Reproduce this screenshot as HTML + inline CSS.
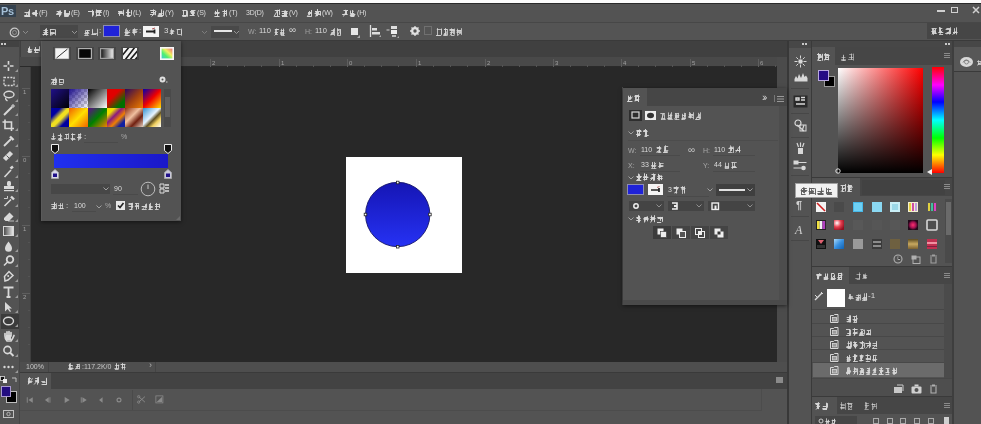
<!DOCTYPE html><html><head><meta charset="utf-8"><style>
html,body{margin:0;padding:0;width:981px;height:424px;overflow:hidden;background:#535353}
.a{position:absolute}
.t{position:absolute;font-family:"Liberation Sans",sans-serif;white-space:nowrap;line-height:1}
svg{overflow:visible}
#w{position:absolute;left:0;top:0;width:981px;height:424px;filter:blur(0.45px)}
</style></head><body><div id="w">
<div class="a" style="left:0px;top:0px;width:981px;height:424px;background:#535353;"></div>
<div class="a" style="left:0px;top:0px;width:981px;height:3px;background:#fbfbfb;"></div>
<div class="a" style="left:0px;top:3px;width:981px;height:1px;background:#2a2a2a;"></div>
<div class="a" style="left:0px;top:4px;width:981px;height:18px;background:#535353;"></div>
<div class="a" style="left:0px;top:22px;width:981px;height:1px;background:#474747;"></div>
<div class="a" style="left:0px;top:23px;width:981px;height:17px;background:#545454;"></div>
<div class="a" style="left:0px;top:40px;width:981px;height:1px;background:#3a3a3a;"></div>
<div class="a" style="left:0px;top:5px;width:16px;height:12px;background:#34414e;"></div>
<div class="t" style="left:1px;top:6px;font-size:11px;color:#a4bfd6;font-weight:bold;letter-spacing:-0.3px;">Ps</div>
<svg class="a" style="left:24px;top:9px" width="15" height="8"><path d="M0.7 7.5H6.2M0.2 6.5H5.2M0.4 7.5H6.1M0.5 3.5H5.3M5.5 0.3V7.5M4.5 2.3V6.6M2.0 7.5L3.2 3.6M8.5 3.5H12.7M8.8 4.5H13.6M7.9 4.5H13.6M8.6 5.5H12.6M12.5 1.0V7.2M11.5 1.1V7.3M12.5 1.7V7.4" stroke="rgb(215,215,215)" stroke-opacity="0.96" stroke-width="1" fill="none"/></svg>
<div class="t" style="left:39px;top:9px;font-size:7px;color:#dcdcdc;letter-spacing:-0.2px;">(F)</div>
<svg class="a" style="left:56px;top:9px" width="15" height="8"><path d="M0.6 4.5H5.5M0.1 5.5H5.3M0.6 2.5H4.5M1.8 3.5H6.2M1.5 4.5H4.8M4.5 1.4V6.6M3.5 2.0V5.7M3.5 1.6V7.9M8.8 5.5H13.0M9.2 6.5H13.1M8.2 7.5H12.6M7.9 4.5H13.3M8.3 6.5H12.1M8.5 1.1V6.7M13.5 2.0V5.9M9.5 1.0V7.1" stroke="rgb(215,215,215)" stroke-opacity="0.96" stroke-width="1" fill="none"/></svg>
<div class="t" style="left:71px;top:9px;font-size:7px;color:#dcdcdc;letter-spacing:-0.2px;">(E)</div>
<svg class="a" style="left:88px;top:9px" width="15" height="8"><path d="M0.3 2.5H5.9M0.9 2.5H5.2M0.0 2.5H5.5M4.5 0.8V7.7M5.5 2.3V6.4M4.5 1.1V5.9M8.2 6.5H13.0M8.7 1.5H13.7M7.9 1.5H13.5M7.6 3.5H13.8M7.7 2.5H13.1M8.5 0.5V7.1M11.5 2.3V6.6M7.7 7.5L12.1 3.9" stroke="rgb(215,215,215)" stroke-opacity="0.96" stroke-width="1" fill="none"/></svg>
<div class="t" style="left:103px;top:9px;font-size:7px;color:#dcdcdc;letter-spacing:-0.2px;">(I)</div>
<svg class="a" style="left:118px;top:9px" width="15" height="8"><path d="M0.2 4.5H6.1M0.5 3.5H4.7M0.0 2.5H4.5M0.3 4.5H5.3M5.5 0.7V6.5M1.5 2.0V6.8M8.5 6.5H12.3M7.9 3.5H12.3M9.1 7.5H12.3M8.9 6.5H13.4M10.5 0.1V7.9M9.5 0.6V6.3M13.5 1.1V5.8" stroke="rgb(215,215,215)" stroke-opacity="0.96" stroke-width="1" fill="none"/></svg>
<div class="t" style="left:133px;top:9px;font-size:7px;color:#dcdcdc;letter-spacing:-0.2px;">(L)</div>
<svg class="a" style="left:150px;top:9px" width="15" height="8"><path d="M0.2 1.5H5.4M0.9 3.5H4.4M0.0 5.5H4.6M1.2 3.5H4.7M5.5 1.9V6.2M3.5 0.4V6.1M1.6 7.5L6.2 2.2M7.7 6.5H13.5M7.6 7.5H12.7M8.7 4.5H12.6M8.4 5.5H12.0M11.5 0.3V8.0M13.5 1.6V6.7" stroke="rgb(215,215,215)" stroke-opacity="0.96" stroke-width="1" fill="none"/></svg>
<div class="t" style="left:165px;top:9px;font-size:7px;color:#dcdcdc;letter-spacing:-0.2px;">(Y)</div>
<svg class="a" style="left:182px;top:9px" width="15" height="8"><path d="M0.4 7.5H4.6M0.4 1.5H5.4M0.6 6.5H5.3M0.1 6.5H4.9M4.5 2.0V6.8M5.5 2.1V7.7M1.5 1.2V5.9M9.0 1.5H13.5M8.9 4.5H12.7M8.5 3.5H12.8M7.7 6.5H12.7M8.0 2.5H12.3M11.5 1.8V5.8M10.5 1.5V6.8M11.5 1.7V6.9" stroke="rgb(215,215,215)" stroke-opacity="0.96" stroke-width="1" fill="none"/></svg>
<div class="t" style="left:197px;top:9px;font-size:7px;color:#dcdcdc;letter-spacing:-0.2px;">(S)</div>
<svg class="a" style="left:214px;top:9px" width="15" height="8"><path d="M0.5 4.5H5.3M1.8 7.5H4.6M0.4 7.5H5.5M0.7 3.5H5.7M3.5 0.5V7.3M1.5 1.9V5.7M9.2 2.5H12.0M9.3 2.5H13.0M9.4 4.5H12.2M8.3 2.5H12.8M10.5 0.9V7.8M10.5 0.8V6.9M12.5 0.9V6.8M9.4 7.5L10.9 3.8" stroke="rgb(215,215,215)" stroke-opacity="0.96" stroke-width="1" fill="none"/></svg>
<div class="t" style="left:229px;top:9px;font-size:7px;color:#dcdcdc;letter-spacing:-0.2px;">(T)</div>
<div class="t" style="left:246px;top:9px;font-size:7px;color:#dcdcdc;letter-spacing:-0.2px;">3D(D)</div>
<svg class="a" style="left:274px;top:9px" width="15" height="8"><path d="M0.2 7.5H5.8M1.5 1.5H5.8M0.8 1.5H4.6M3.5 1.3V6.8M3.5 0.8V7.3M5.5 0.4V5.9M0.0 7.5L3.3 1.8M7.6 6.5H12.2M8.1 4.5H12.8M8.0 7.5H13.6M8.0 4.5H13.6M7.6 2.5H13.4M11.5 1.3V7.5M10.5 1.6V7.4M12.5 2.4V7.9M8.5 7.5L13.7 2.5" stroke="rgb(215,215,215)" stroke-opacity="0.96" stroke-width="1" fill="none"/></svg>
<div class="t" style="left:289px;top:9px;font-size:7px;color:#dcdcdc;letter-spacing:-0.2px;">(V)</div>
<svg class="a" style="left:307px;top:9px" width="15" height="8"><path d="M0.2 7.5H4.8M0.9 4.5H4.7M1.0 3.5H5.0M2.5 2.0V6.3M4.5 1.0V7.2M0.3 7.5L3.2 3.2M7.6 4.5H12.5M8.5 3.5H12.0M8.8 5.5H13.7M8.0 2.5H13.8M13.5 2.3V6.7M9.5 2.3V7.3M10.5 0.0V7.1M8.5 7.5L11.2 2.5" stroke="rgb(215,215,215)" stroke-opacity="0.96" stroke-width="1" fill="none"/></svg>
<div class="t" style="left:322px;top:9px;font-size:7px;color:#dcdcdc;letter-spacing:-0.2px;">(W)</div>
<svg class="a" style="left:342px;top:9px" width="15" height="8"><path d="M1.5 1.5H6.0M0.7 5.5H5.7M0.2 5.5H4.5M4.5 1.7V5.9M3.5 0.8V5.6M1.4 7.5L5.1 1.1M8.7 7.5H12.4M7.8 6.5H12.8M9.1 4.5H12.3M8.6 6.5H12.1M8.8 5.5H13.4M8.5 1.5V5.7M10.5 1.1V7.9M8.6 7.5L11.3 1.8" stroke="rgb(215,215,215)" stroke-opacity="0.96" stroke-width="1" fill="none"/></svg>
<div class="t" style="left:357px;top:9px;font-size:7px;color:#dcdcdc;letter-spacing:-0.2px;">(H)</div>
<div class="a" style="left:937px;top:10px;width:8px;height:2px;background:#d0d0d0;"></div>
<div class="a" style="left:951px;top:7px;width:5px;height:4px;border:1.5px solid #d0d0d0;"></div>
<svg class="a" style="left:972px;top:6px" width="8" height="8" viewBox="0 0 8 8"><path d="M1 1L7 7M7 1L1 7" stroke="#d0d0d0" stroke-width="1.5"/></svg>
<svg class="a" style="left:9px;top:27px" width="12" height="11" viewBox="0 0 12 11"><circle cx="5.5" cy="5.5" r="4.3" fill="none" stroke="#c8c8c8" stroke-width="1.2"/><circle cx="5.5" cy="5.5" r="2" fill="none" stroke="#9a9a9a" stroke-width="0.8"/></svg>
<svg class="a" style="left:23px;top:31px" width="5" height="3" viewBox="0 0 5 3"><path d="M0 0L2.5 2.5L5 0" fill="none" stroke="#999" stroke-width="0.8"/></svg>
<div class="a" style="left:40px;top:25px;width:38px;height:13px;background:#484848;"></div>
<svg class="a" style="left:42px;top:28px" width="15" height="8"><path d="M1.4 6.5H5.3M1.2 4.5H6.2M0.5 6.5H6.2M1.4 2.5H5.9M3.5 0.9V6.9M4.5 1.8V6.5M4.5 0.2V7.6M1.5 7.5L4.0 2.7M8.4 4.5H12.0M7.9 1.5H12.9M8.0 5.5H12.9M13.5 1.3V7.3M8.5 1.1V7.3M8.5 7.5L13.8 4.0" stroke="rgb(215,215,215)" stroke-opacity="0.88" stroke-width="1" fill="none"/></svg>
<svg class="a" style="left:72px;top:31px" width="5" height="3" viewBox="0 0 5 3"><path d="M0 0L2.5 2.5L5 0" fill="none" stroke="#aaa" stroke-width="0.8"/></svg>
<svg class="a" style="left:84px;top:28px" width="15" height="8"><path d="M1.8 2.5H5.9M0.3 5.5H5.3M0.3 7.5H4.7M1.7 4.5H5.0M3.5 2.1V7.1M1.5 2.3V6.4M1.5 7.5L4.4 2.1M7.5 6.5H12.4M7.7 6.5H12.0M9.2 5.5H13.3M8.5 0.9V5.9M8.5 2.2V6.2M13.5 0.7V7.9" stroke="rgb(215,215,215)" stroke-opacity="0.80" stroke-width="1" fill="none"/></svg>
<div class="t" style="left:99px;top:27px;font-size:8px;color:#dcdcdc;">:</div>
<div class="a" style="left:103px;top:25px;width:17px;height:12px;background:#1f22d8;border:1px solid #8c8cb0;box-sizing:border-box;"></div>
<svg class="a" style="left:124px;top:28px" width="15" height="8"><path d="M0.5 7.5H5.8M0.4 4.5H5.6M1.7 7.5H4.8M1.7 5.5H4.5M1.4 4.5H6.2M3.5 1.8V6.5M2.5 0.1V5.8M1.5 1.1V7.2M1.5 7.5L6.2 1.8M8.4 2.5H12.5M8.7 1.5H13.7M9.0 4.5H12.8M8.1 4.5H12.4M8.5 3.5H13.3M10.5 0.2V7.4M9.5 1.4V5.9" stroke="rgb(215,215,215)" stroke-opacity="0.80" stroke-width="1" fill="none"/></svg>
<div class="t" style="left:139px;top:27px;font-size:8px;color:#dcdcdc;">:</div>
<div class="a" style="left:143px;top:26px;width:16px;height:11px;background:#f4f4f4;"></div>
<svg class="a" style="left:143px;top:26px" width="16" height="11" viewBox="0 0 16 11"><path d="M3 5.5h9M11.5 3.5v4" stroke="#222" stroke-width="1.8"/><path d="M12 2L9 3" stroke="#a03030" stroke-width="0.8"/></svg>
<div class="t" style="left:164px;top:27px;font-size:8px;color:#dcdcdc;">3</div>
<svg class="a" style="left:169px;top:28px" width="14" height="8"><path d="M1.3 3.5H5.4M1.3 2.5H4.9M0.6 5.5H4.6M1.4 4.5H4.3M2.5 0.6V7.0M3.5 2.3V6.0M7.7 1.5H11.5M8.7 6.5H11.9M8.6 1.5H11.2M12.5 0.6V7.7M8.5 1.3V6.4M12.5 1.7V6.4" stroke="rgb(215,215,215)" stroke-opacity="0.80" stroke-width="1" fill="none"/></svg>
<svg class="a" style="left:202px;top:31px" width="5" height="3" viewBox="0 0 5 3"><path d="M0 0L2.5 2.5L5 0" fill="none" stroke="#888" stroke-width="0.8"/></svg>
<div class="a" style="left:211px;top:26px;width:28px;height:12px;background:#494949;"></div>
<div class="a" style="left:214px;top:30px;width:18px;height:2px;background:#e6e6e6;"></div>
<svg class="a" style="left:234px;top:31px" width="5" height="3" viewBox="0 0 5 3"><path d="M0 0L2.5 2.5L5 0" fill="none" stroke="#aaa" stroke-width="0.8"/></svg>
<div class="t" style="left:248px;top:28px;font-size:7px;color:#a0a0a0;">W:</div>
<div class="t" style="left:259px;top:27px;font-size:7.5px;color:#dcdcdc;">110</div>
<svg class="a" style="left:274px;top:28px" width="12" height="8"><path d="M1.1 1.5H4.8M0.8 1.5H4.7M1.4 6.5H3.9M0.6 4.5H3.7M1.5 1.3V6.6M2.5 0.5V6.6M0.6 7.5L3.8 3.9M6.3 6.5H10.0M6.0 4.5H10.2M6.1 5.5H10.5M6.9 7.5H10.7M6.6 2.5H10.3M7.5 0.8V7.0M9.5 0.5V6.1M9.5 1.2V7.5" stroke="rgb(215,215,215)" stroke-opacity="0.80" stroke-width="1" fill="none"/></svg>
<div class="t" style="left:289px;top:25px;font-size:10px;color:#cfcfcf;">&#x221E;</div>
<div class="t" style="left:305px;top:28px;font-size:7px;color:#a0a0a0;">H:</div>
<div class="t" style="left:315px;top:27px;font-size:7.5px;color:#dcdcdc;">110</div>
<svg class="a" style="left:330px;top:28px" width="12" height="8"><path d="M0.3 6.5H4.1M1.3 2.5H4.6M0.9 5.5H3.5M1.3 4.5H4.7M4.5 0.1V7.9M3.5 1.0V6.3M0.9 7.5L4.3 1.9M7.3 7.5H10.3M7.3 2.5H9.7M7.0 1.5H10.3M10.5 1.1V7.7M7.5 0.2V7.0M10.5 1.3V6.2M7.5 7.5L9.6 3.4" stroke="rgb(215,215,215)" stroke-opacity="0.80" stroke-width="1" fill="none"/></svg>
<div class="a" style="left:351px;top:28px;width:7px;height:7px;background:#e6e6e6;"></div>
<svg class="a" style="left:357px;top:35px" width="4" height="4" viewBox="0 0 4 4"><path d="M0 3L3 0V3Z" fill="#aaa"/></svg>
<svg class="a" style="left:369px;top:25px" width="13" height="13" viewBox="0 0 13 13"><path d="M1.5 0v12" stroke="#ddd" stroke-width="1.3"/><rect x="3" y="3" width="5" height="2.5" fill="#ddd"/><rect x="3" y="7" width="8" height="2.5" fill="#ddd"/><path d="M10 12L12 10V12Z" fill="#aaa"/></svg>
<svg class="a" style="left:386px;top:25px" width="14" height="14" viewBox="0 0 14 14"><path d="M0.5 5h3" stroke="#ccc" stroke-width="1"/><rect x="5" y="1" width="6" height="3" fill="#ddd"/><rect x="5" y="5" width="6" height="4" fill="#eee"/><rect x="6" y="10" width="4" height="2" fill="#bbb"/><path d="M11 13L13 11V13Z" fill="#aaa"/></svg>
<svg class="a" style="left:410px;top:26px" width="10" height="10" viewBox="0 0 10 10"><circle cx="5" cy="5" r="2.8" fill="none" stroke="#e0e0e0" stroke-width="2.2"/><path d="M5 0v2M5 8v2M0 5h2M8 5h2M1.5 1.5l1.4 1.4M7.1 7.1l1.4 1.4M1.5 8.5l1.4-1.4M7.1 2.9l1.4-1.4" stroke="#e0e0e0" stroke-width="1.3"/></svg>
<div class="a" style="left:424px;top:26px;width:8px;height:9px;border:1px solid #707070;box-sizing:border-box;"></div>
<svg class="a" style="left:436px;top:28px" width="27" height="8"><path d="M0.8 1.5H4.9M0.3 7.5H4.9M0.0 7.5H4.8M1.5 0.1V7.8M5.5 0.6V6.2M5.5 0.8V7.3M7.9 1.5H11.1M7.2 7.5H11.0M8.0 5.5H10.6M8.1 1.5H12.0M7.5 6.5H10.9M11.5 2.0V7.7M9.5 0.0V5.8M9.5 1.7V7.6M8.4 7.5L10.9 3.4M13.7 1.5H17.7M13.5 2.5H18.8M13.9 4.5H17.3M15.0 7.5H18.5M13.6 1.5H18.1M15.5 0.3V6.9M18.5 0.6V6.7M17.5 1.8V6.1M14.0 7.5L17.1 1.8M20.5 2.5H25.2M21.6 2.5H24.6M20.8 3.5H24.0M20.5 4.5H24.3M25.5 0.2V6.9M24.5 2.0V5.8M21.5 0.7V7.7M22.0 7.5L24.6 3.8" stroke="rgb(215,215,215)" stroke-opacity="0.80" stroke-width="1" fill="none"/></svg>
<div class="a" style="left:927px;top:23px;width:54px;height:16px;background:#464646;"></div>
<svg class="a" style="left:931px;top:27px" width="28" height="8"><path d="M0.3 4.5H4.8M1.2 6.5H5.8M1.2 5.5H5.2M0.6 1.5H5.7M1.5 1.8V5.8M4.5 2.0V7.0M2.5 1.5V7.8M1.0 7.5L4.4 2.2M7.3 5.5H11.9M7.7 5.5H12.3M8.2 7.5H12.1M8.3 1.5H11.3M9.5 2.1V5.6M9.5 0.5V6.3M8.5 0.0V5.8M8.6 7.5L11.1 3.6M14.2 6.5H19.7M15.4 1.5H19.1M15.6 5.5H18.5M14.6 2.5H19.5M19.5 0.3V6.8M18.5 2.3V7.5M15.9 7.5L19.7 2.4M22.1 5.5H26.6M22.2 5.5H25.2M22.5 5.5H25.7M25.5 0.4V7.5M23.5 1.2V7.1M21.5 7.5L26.0 3.7" stroke="rgb(215,215,215)" stroke-opacity="0.88" stroke-width="1" fill="none"/></svg>
<div class="a" style="left:0px;top:41px;width:19px;height:383px;background:#535353;"></div>
<div class="a" style="left:0px;top:41px;width:19px;height:6px;background:#424242;"></div>
<div class="a" style="left:1px;top:43px;width:2px;height:2px;background:#c8c8c8;"></div>
<div class="a" style="left:4px;top:43px;width:2px;height:2px;background:#c8c8c8;"></div>
<div class="a" style="left:19px;top:41px;width:1px;height:383px;background:#464646;"></div>
<div class="a" style="left:20px;top:41px;width:767px;height:16px;background:#404040;"></div>
<div class="a" style="left:21px;top:41px;width:21px;height:16px;background:#515151;"></div>
<svg class="a" style="left:27px;top:46px" width="14" height="7"><path d="M1.5 6.5H4.6M0.6 5.5H5.1M1.5 3.5H4.4M2.5 0.5V6.2M2.5 1.1V6.6M1.5 2.1V6.0M1.2 6.5L5.3 3.5M7.1 3.5H12.2M8.4 3.5H11.9M7.1 4.5H12.6M7.5 6.5H11.5M8.5 1.1V6.2M12.5 0.3V5.2" stroke="rgb(215,215,215)" stroke-opacity="0.96" stroke-width="1" fill="none"/></svg>
<div class="a" style="left:20px;top:57px;width:767px;height:10px;background:#494949;"></div>
<div class="a" style="left:20px;top:66px;width:757px;height:1px;background:#2a2a2a;"></div>
<div class="a" style="left:20px;top:67px;width:11px;height:295px;background:#494949;"></div>
<div class="a" style="left:30px;top:67px;width:1px;height:295px;background:#3e3e3e;"></div>
<div class="a" style="left:210px;top:59px;width:1px;height:8px;background:#5e5e5e;"></div>
<div class="t" style="left:212px;top:60px;font-size:6px;color:#a0a0a0;">2</div>
<div class="a" style="left:227px;top:65px;width:1px;height:2px;background:#545454;"></div>
<div class="a" style="left:244px;top:65px;width:1px;height:2px;background:#545454;"></div>
<div class="a" style="left:261px;top:65px;width:1px;height:2px;background:#545454;"></div>
<div class="a" style="left:279px;top:59px;width:1px;height:8px;background:#5e5e5e;"></div>
<div class="t" style="left:281px;top:60px;font-size:6px;color:#a0a0a0;">1</div>
<div class="a" style="left:296px;top:65px;width:1px;height:2px;background:#545454;"></div>
<div class="a" style="left:313px;top:65px;width:1px;height:2px;background:#545454;"></div>
<div class="a" style="left:330px;top:65px;width:1px;height:2px;background:#545454;"></div>
<div class="a" style="left:347px;top:59px;width:1px;height:8px;background:#5e5e5e;"></div>
<div class="t" style="left:349px;top:60px;font-size:6px;color:#a0a0a0;">0</div>
<div class="a" style="left:364px;top:65px;width:1px;height:2px;background:#545454;"></div>
<div class="a" style="left:381px;top:65px;width:1px;height:2px;background:#545454;"></div>
<div class="a" style="left:398px;top:65px;width:1px;height:2px;background:#545454;"></div>
<div class="a" style="left:416px;top:59px;width:1px;height:8px;background:#5e5e5e;"></div>
<div class="t" style="left:418px;top:60px;font-size:6px;color:#a0a0a0;">1</div>
<div class="a" style="left:433px;top:65px;width:1px;height:2px;background:#545454;"></div>
<div class="a" style="left:450px;top:65px;width:1px;height:2px;background:#545454;"></div>
<div class="a" style="left:467px;top:65px;width:1px;height:2px;background:#545454;"></div>
<div class="a" style="left:485px;top:59px;width:1px;height:8px;background:#5e5e5e;"></div>
<div class="t" style="left:487px;top:60px;font-size:6px;color:#a0a0a0;">2</div>
<div class="a" style="left:502px;top:65px;width:1px;height:2px;background:#545454;"></div>
<div class="a" style="left:519px;top:65px;width:1px;height:2px;background:#545454;"></div>
<div class="a" style="left:536px;top:65px;width:1px;height:2px;background:#545454;"></div>
<div class="a" style="left:553px;top:59px;width:1px;height:8px;background:#5e5e5e;"></div>
<div class="t" style="left:555px;top:60px;font-size:6px;color:#a0a0a0;">3</div>
<div class="a" style="left:570px;top:65px;width:1px;height:2px;background:#545454;"></div>
<div class="a" style="left:587px;top:65px;width:1px;height:2px;background:#545454;"></div>
<div class="a" style="left:604px;top:65px;width:1px;height:2px;background:#545454;"></div>
<div class="a" style="left:621px;top:59px;width:1px;height:8px;background:#5e5e5e;"></div>
<div class="t" style="left:623px;top:60px;font-size:6px;color:#a0a0a0;">4</div>
<div class="a" style="left:638px;top:65px;width:1px;height:2px;background:#545454;"></div>
<div class="a" style="left:655px;top:65px;width:1px;height:2px;background:#545454;"></div>
<div class="a" style="left:672px;top:65px;width:1px;height:2px;background:#545454;"></div>
<div class="a" style="left:690px;top:59px;width:1px;height:8px;background:#5e5e5e;"></div>
<div class="t" style="left:692px;top:60px;font-size:6px;color:#a0a0a0;">5</div>
<div class="a" style="left:707px;top:65px;width:1px;height:2px;background:#545454;"></div>
<div class="a" style="left:724px;top:65px;width:1px;height:2px;background:#545454;"></div>
<div class="a" style="left:741px;top:65px;width:1px;height:2px;background:#545454;"></div>
<div class="a" style="left:758px;top:59px;width:1px;height:8px;background:#5e5e5e;"></div>
<div class="t" style="left:760px;top:60px;font-size:6px;color:#a0a0a0;">6</div>
<div class="a" style="left:775px;top:65px;width:1px;height:2px;background:#545454;"></div>
<div class="a" style="left:22px;top:88px;width:8px;height:1px;background:#5e5e5e;"></div>
<div class="t" style="left:23px;top:89px;font-size:6px;color:#a0a0a0;">1</div>
<div class="a" style="left:28px;top:105px;width:2px;height:1px;background:#545454;"></div>
<div class="a" style="left:28px;top:122px;width:2px;height:1px;background:#545454;"></div>
<div class="a" style="left:28px;top:139px;width:2px;height:1px;background:#545454;"></div>
<div class="a" style="left:22px;top:156px;width:8px;height:1px;background:#5e5e5e;"></div>
<div class="t" style="left:23px;top:157px;font-size:6px;color:#a0a0a0;">0</div>
<div class="a" style="left:28px;top:173px;width:2px;height:1px;background:#545454;"></div>
<div class="a" style="left:28px;top:190px;width:2px;height:1px;background:#545454;"></div>
<div class="a" style="left:28px;top:207px;width:2px;height:1px;background:#545454;"></div>
<div class="a" style="left:22px;top:225px;width:8px;height:1px;background:#5e5e5e;"></div>
<div class="t" style="left:23px;top:226px;font-size:6px;color:#a0a0a0;">1</div>
<div class="a" style="left:28px;top:242px;width:2px;height:1px;background:#545454;"></div>
<div class="a" style="left:28px;top:259px;width:2px;height:1px;background:#545454;"></div>
<div class="a" style="left:28px;top:276px;width:2px;height:1px;background:#545454;"></div>
<div class="a" style="left:22px;top:293px;width:8px;height:1px;background:#5e5e5e;"></div>
<div class="t" style="left:23px;top:294px;font-size:6px;color:#a0a0a0;">2</div>
<div class="a" style="left:28px;top:310px;width:2px;height:1px;background:#545454;"></div>
<div class="a" style="left:28px;top:327px;width:2px;height:1px;background:#545454;"></div>
<div class="a" style="left:28px;top:344px;width:2px;height:1px;background:#545454;"></div>
<div class="a" style="left:31px;top:67px;width:746px;height:295px;background:#282828;"></div>
<div class="a" style="left:777px;top:57px;width:10px;height:305px;background:#4b4b4b;"></div>
<div class="a" style="left:20px;top:362px;width:767px;height:10px;background:#4e4e4e;"></div>
<div class="a" style="left:48px;top:362px;width:1px;height:10px;background:#444;"></div>
<div class="a" style="left:155px;top:362px;width:1px;height:10px;background:#444;"></div>
<div class="t" style="left:26px;top:363px;font-size:7px;color:#c8c8c8;">100%</div>
<svg class="a" style="left:68px;top:363px" width="14" height="7"><path d="M0.2 5.5H5.6M0.5 6.5H4.4M1.2 5.5H4.5M1.4 2.5H4.7M0.6 2.5H4.7M1.5 1.1V5.1M1.5 0.6V5.9M2.5 0.1V6.6M1.9 6.5L4.9 3.7M7.5 5.5H11.5M8.5 1.5H11.1M7.9 3.5H11.6M9.5 1.1V5.2M11.5 0.8V6.2M7.3 6.5L10.9 1.2" stroke="rgb(215,215,215)" stroke-opacity="0.80" stroke-width="1" fill="none"/></svg>
<div class="t" style="left:82px;top:363px;font-size:7px;color:#c8c8c8;">:117.2K/0</div>
<svg class="a" style="left:114px;top:363px" width="13" height="7"><path d="M1.2 2.5H5.2M0.4 5.5H4.3M0.9 6.5H4.2M4.5 1.6V6.5M2.5 1.3V6.1M2.5 0.1V6.0M6.5 1.5H11.2M7.1 1.5H11.4M7.4 4.5H11.5M8.5 0.0V5.3M10.5 0.9V6.9M8.5 1.4V6.4" stroke="rgb(215,215,215)" stroke-opacity="0.80" stroke-width="1" fill="none"/></svg>
<div class="t" style="left:149px;top:361px;font-size:9px;color:#b0b0b0;">&#x203A;</div>
<div class="a" style="left:20px;top:372px;width:767px;height:1px;background:#3a3a3a;"></div>
<div class="a" style="left:20px;top:373px;width:767px;height:16px;background:#434343;"></div>
<div class="a" style="left:20px;top:373px;width:31px;height:16px;background:#535353;"></div>
<svg class="a" style="left:27px;top:377px" width="21" height="8"><path d="M1.4 1.5H4.2M1.0 5.5H4.8M0.9 4.5H5.5M1.5 1.3V7.0M2.5 0.1V6.1M1.1 7.5L5.6 1.4M8.1 4.5H11.7M8.1 3.5H11.9M8.1 1.5H11.1M11.5 0.0V6.0M11.5 1.1V6.2M10.5 0.5V7.7M7.1 7.5L10.9 3.2M14.5 7.5H19.7M15.2 5.5H18.6M15.7 7.5H19.3M15.6 7.5H19.7M14.3 4.5H18.2M19.5 1.8V7.2M19.5 0.8V7.4" stroke="rgb(215,215,215)" stroke-opacity="0.88" stroke-width="1" fill="none"/></svg>
<div class="a" style="left:776px;top:377px;width:7px;height:6px;background:#8a8a8a;"></div>
<div class="a" style="left:20px;top:389px;width:767px;height:35px;background:#535353;"></div>
<div class="a" style="left:761px;top:389px;width:1px;height:22px;background:#4c4c4c;"></div>
<div class="a" style="left:20px;top:410px;width:742px;height:1px;background:#4c4c4c;"></div>
<svg class="a" style="left:25px;top:395px" width="10" height="10" viewBox="0 0 10 10"><g transform="translate(5 5) scale(0.78) translate(-5 -5)"><path d="M1.5 1.5v7" stroke="#8a8a8a" stroke-width="1.2"/><path d="M8.5 1.5L3 5L8.5 8.5Z" fill="#8a8a8a"/></g></svg>
<svg class="a" style="left:43px;top:395px" width="10" height="10" viewBox="0 0 10 10"><g transform="translate(5 5) scale(0.78) translate(-5 -5)"><path d="M7.5 1.5v7" stroke="#8a8a8a" stroke-width="1.2"/><path d="M6 1.5L1 5L6 8.5Z" fill="#8a8a8a"/></g></svg>
<svg class="a" style="left:62px;top:395px" width="10" height="10" viewBox="0 0 10 10"><g transform="translate(5 5) scale(0.78) translate(-5 -5)"><path d="M2 1L8.5 5L2 9Z" fill="#8a8a8a"/></g></svg>
<svg class="a" style="left:79px;top:395px" width="10" height="10" viewBox="0 0 10 10"><g transform="translate(5 5) scale(0.78) translate(-5 -5)"><path d="M1.5 1.5v7" stroke="#8a8a8a" stroke-width="1.2"/><path d="M3 1.5L8.5 5L3 8.5Z" fill="#8a8a8a"/></g></svg>
<svg class="a" style="left:96px;top:395px" width="10" height="10" viewBox="0 0 10 10"><g transform="translate(5 5) scale(0.78) translate(-5 -5)"><path d="M7 1.5L2.5 5L7 8.5Z" fill="#8a8a8a"/></g></svg>
<svg class="a" style="left:114px;top:395px" width="10" height="10" viewBox="0 0 10 10"><g transform="translate(5 5) scale(0.78) translate(-5 -5)"><circle cx="5" cy="5" r="2.5" fill="none" stroke="#8a8a8a" stroke-width="1.5"/></g></svg>
<div class="a" style="left:132px;top:390px;width:1px;height:20px;background:#4a4a4a;"></div>
<svg class="a" style="left:136px;top:394px" width="12" height="12" viewBox="0 0 12 12"><g transform="translate(5 5) scale(0.78) translate(-5 -5)"><path d="M2 2L10 9M10 2L2 9" stroke="#8a8a8a" stroke-width="1.2"/><circle cx="2" cy="2" r="1.5" fill="none" stroke="#8a8a8a"/><circle cx="2" cy="9" r="1.5" fill="none" stroke="#8a8a8a"/></g></svg>
<svg class="a" style="left:154px;top:394px" width="11" height="11" viewBox="0 0 11 11"><g transform="translate(5 5) scale(0.78) translate(-5 -5)"><rect x="1" y="1" width="9" height="9" fill="none" stroke="#8a8a8a"/><path d="M2 9L9 2V9Z" fill="#8a8a8a"/></g></svg>
<svg class="a" style="left:2px;top:60px" width="14" height="12" viewBox="0 0 14 12"><path d="M6.5 1v10M1.5 6h10" stroke="#d8d8d8" stroke-width="1.6"/><circle cx="6.5" cy="6" r="1.6" fill="#535353"/></svg>
<svg class="a" style="left:15px;top:69px" width="3" height="3" viewBox="0 0 3 3"><path d="M0 3L3 0V3Z" fill="#9a9a9a"/></svg>
<svg class="a" style="left:2px;top:74.5px" width="14" height="12" viewBox="0 0 14 12"><rect x="2" y="2.5" width="10" height="8" fill="none" stroke="#d8d8d8" stroke-width="1.3" stroke-dasharray="2 1.2"/></svg>
<svg class="a" style="left:15px;top:83.5px" width="3" height="3" viewBox="0 0 3 3"><path d="M0 3L3 0V3Z" fill="#9a9a9a"/></svg>
<svg class="a" style="left:2px;top:90px" width="14" height="12" viewBox="0 0 14 12"><ellipse cx="7" cy="4.5" rx="5" ry="3.2" fill="none" stroke="#d8d8d8" stroke-width="1.4"/><path d="M4 7.5C3 9 4 10 5.5 11" fill="none" stroke="#d8d8d8" stroke-width="1.3"/></svg>
<svg class="a" style="left:15px;top:99px" width="3" height="3" viewBox="0 0 3 3"><path d="M0 3L3 0V3Z" fill="#9a9a9a"/></svg>
<svg class="a" style="left:2px;top:104px" width="14" height="12" viewBox="0 0 14 12"><path d="M2 11L10 3" stroke="#d8d8d8" stroke-width="2"/><path d="M11 0v4M9 2h4" stroke="#d8d8d8" stroke-width="1"/></svg>
<svg class="a" style="left:15px;top:113px" width="3" height="3" viewBox="0 0 3 3"><path d="M0 3L3 0V3Z" fill="#9a9a9a"/></svg>
<svg class="a" style="left:2px;top:119px" width="14" height="12" viewBox="0 0 14 12"><path d="M3 0.5v9h9M0.5 3h9v9" fill="none" stroke="#d8d8d8" stroke-width="1.6"/></svg>
<svg class="a" style="left:15px;top:128px" width="3" height="3" viewBox="0 0 3 3"><path d="M0 3L3 0V3Z" fill="#9a9a9a"/></svg>
<svg class="a" style="left:2px;top:134.5px" width="14" height="12" viewBox="0 0 14 12"><path d="M2 11L9 4" stroke="#d8d8d8" stroke-width="1.8"/><path d="M8 1.5L11.5 5" stroke="#d8d8d8" stroke-width="2.4"/></svg>
<svg class="a" style="left:15px;top:143.5px" width="3" height="3" viewBox="0 0 3 3"><path d="M0 3L3 0V3Z" fill="#9a9a9a"/></svg>
<svg class="a" style="left:2px;top:150px" width="14" height="12" viewBox="0 0 14 12"><path d="M2.5 9.5L9.5 2.5" stroke="#d8d8d8" stroke-width="4.5"/><path d="M4.5 5.5l3 3" stroke="#535353" stroke-width="1"/></svg>
<svg class="a" style="left:15px;top:159px" width="3" height="3" viewBox="0 0 3 3"><path d="M0 3L3 0V3Z" fill="#9a9a9a"/></svg>
<svg class="a" style="left:2px;top:165.5px" width="14" height="12" viewBox="0 0 14 12"><path d="M2.5 11L9 4" stroke="#d8d8d8" stroke-width="1.6"/><path d="M8.5 2.5L11 0.5" stroke="#d8d8d8" stroke-width="2.6"/></svg>
<svg class="a" style="left:15px;top:174.5px" width="3" height="3" viewBox="0 0 3 3"><path d="M0 3L3 0V3Z" fill="#9a9a9a"/></svg>
<svg class="a" style="left:2px;top:180px" width="14" height="12" viewBox="0 0 14 12"><rect x="5" y="1" width="4" height="5" rx="1.5" fill="#d8d8d8"/><rect x="2" y="6" width="10" height="3" fill="#d8d8d8"/><rect x="2" y="10" width="10" height="1.2" fill="#d8d8d8"/></svg>
<svg class="a" style="left:15px;top:189px" width="3" height="3" viewBox="0 0 3 3"><path d="M0 3L3 0V3Z" fill="#9a9a9a"/></svg>
<svg class="a" style="left:2px;top:195px" width="14" height="12" viewBox="0 0 14 12"><path d="M2.5 11L9 4.5" stroke="#d8d8d8" stroke-width="1.6"/><path d="M9 1.5L12 4.5" stroke="#d8d8d8" stroke-width="2.4"/><path d="M2 3.5h3.5V1" fill="none" stroke="#d8d8d8" stroke-width="0.9"/></svg>
<svg class="a" style="left:15px;top:204px" width="3" height="3" viewBox="0 0 3 3"><path d="M0 3L3 0V3Z" fill="#9a9a9a"/></svg>
<svg class="a" style="left:2px;top:210px" width="14" height="12" viewBox="0 0 14 12"><path d="M2 8L7.5 2.5L11.5 6.5L7 11H3.5L2 9.5Z" fill="#d8d8d8"/><path d="M6 11h6" stroke="#d8d8d8" stroke-width="0.8"/></svg>
<svg class="a" style="left:15px;top:219px" width="3" height="3" viewBox="0 0 3 3"><path d="M0 3L3 0V3Z" fill="#9a9a9a"/></svg>
<svg class="a" style="left:2px;top:225px" width="14" height="12" viewBox="0 0 14 12"><rect x="1.5" y="1.5" width="10" height="9" fill="url(#tg)" stroke="#d8d8d8" stroke-width="1"/><defs><linearGradient id="tg"><stop offset="0" stop-color="#444"/><stop offset="1" stop-color="#eee"/></linearGradient></defs></svg>
<svg class="a" style="left:15px;top:234px" width="3" height="3" viewBox="0 0 3 3"><path d="M0 3L3 0V3Z" fill="#9a9a9a"/></svg>
<svg class="a" style="left:2px;top:239.7px" width="14" height="12" viewBox="0 0 14 12"><path d="M6.5 1.5C4 5 3 6.5 3 8.2A3.5 3.5 0 0 0 10 8.2C10 6.5 9 5 6.5 1.5Z" fill="#d8d8d8"/></svg>
<svg class="a" style="left:15px;top:248.7px" width="3" height="3" viewBox="0 0 3 3"><path d="M0 3L3 0V3Z" fill="#9a9a9a"/></svg>
<svg class="a" style="left:2px;top:254.60000000000002px" width="14" height="12" viewBox="0 0 14 12"><circle cx="8" cy="4.5" r="3.3" fill="none" stroke="#d8d8d8" stroke-width="1.8"/><path d="M5.5 7L2 10.5" stroke="#d8d8d8" stroke-width="1.6"/></svg>
<svg class="a" style="left:15px;top:263.6px" width="3" height="3" viewBox="0 0 3 3"><path d="M0 3L3 0V3Z" fill="#9a9a9a"/></svg>
<svg class="a" style="left:2px;top:269.5px" width="14" height="12" viewBox="0 0 14 12"><path d="M3 11L2.5 6.5L7 1.5L11 5.5L6 10Z" fill="none" stroke="#d8d8d8" stroke-width="1.5"/><circle cx="6.2" cy="6" r="1" fill="#d8d8d8"/></svg>
<svg class="a" style="left:15px;top:278.5px" width="3" height="3" viewBox="0 0 3 3"><path d="M0 3L3 0V3Z" fill="#9a9a9a"/></svg>
<svg class="a" style="left:2px;top:285.5px" width="14" height="12" viewBox="0 0 14 12"><path d="M1.5 1.5h10M6.5 1.5v9.5M4.5 11h4" stroke="#d8d8d8" stroke-width="1.8"/></svg>
<svg class="a" style="left:15px;top:294.5px" width="3" height="3" viewBox="0 0 3 3"><path d="M0 3L3 0V3Z" fill="#9a9a9a"/></svg>
<svg class="a" style="left:2px;top:300.5px" width="14" height="12" viewBox="0 0 14 12"><path d="M3 1v9.5L5.5 8L8 11L9 10.3L7 7.5H10Z" fill="#d8d8d8"/></svg>
<svg class="a" style="left:15px;top:309.5px" width="3" height="3" viewBox="0 0 3 3"><path d="M0 3L3 0V3Z" fill="#9a9a9a"/></svg>
<div class="a" style="left:1px;top:314px;width:18px;height:15px;background:#3b3b3b;"></div>
<svg class="a" style="left:2px;top:315.4px" width="14" height="12" viewBox="0 0 14 12"><ellipse cx="6.5" cy="6" rx="5" ry="3.8" fill="none" stroke="#d8d8d8" stroke-width="1.4"/></svg>
<svg class="a" style="left:15px;top:324.4px" width="3" height="3" viewBox="0 0 3 3"><path d="M0 3L3 0V3Z" fill="#9a9a9a"/></svg>
<svg class="a" style="left:2px;top:330px" width="14" height="12" viewBox="0 0 14 12"><path d="M3 6V3.5M5 6V1.8M7 6V1.5M9 6V2.5M3 6C3 8 3 9 5 11H9C10.5 9 11 8 12 5.5" stroke="#d8d8d8" stroke-width="1.7" fill="none" stroke-linecap="round"/><rect x="4" y="5" width="5" height="5" fill="#d8d8d8"/></svg>
<svg class="a" style="left:15px;top:339px" width="3" height="3" viewBox="0 0 3 3"><path d="M0 3L3 0V3Z" fill="#9a9a9a"/></svg>
<svg class="a" style="left:2px;top:345px" width="14" height="12" viewBox="0 0 14 12"><circle cx="5.5" cy="5" r="3.6" fill="none" stroke="#d8d8d8" stroke-width="1.6"/><path d="M8 7.5L11.5 11" stroke="#d8d8d8" stroke-width="2"/></svg>
<svg class="a" style="left:15px;top:354px" width="3" height="3" viewBox="0 0 3 3"><path d="M0 3L3 0V3Z" fill="#9a9a9a"/></svg>
<svg class="a" style="left:2px;top:360.5px" width="14" height="12" viewBox="0 0 14 12"><circle cx="2.5" cy="6" r="1.2" fill="#d8d8d8"/><circle cx="6.5" cy="6" r="1.2" fill="#d8d8d8"/><circle cx="10.5" cy="6" r="1.2" fill="#d8d8d8"/></svg>
<svg class="a" style="left:15px;top:369.5px" width="3" height="3" viewBox="0 0 3 3"><path d="M0 3L3 0V3Z" fill="#9a9a9a"/></svg>
<svg class="a" style="left:0px;top:376px" width="8" height="8" viewBox="0 0 8 8"><rect x="0.5" y="0.5" width="4" height="4" fill="#111" stroke="#ddd" stroke-width="0.8"/><rect x="3" y="3" width="4" height="4" fill="#eee"/></svg>
<svg class="a" style="left:11px;top:376px" width="7" height="7" viewBox="0 0 7 7"><path d="M1 2h4v4" fill="none" stroke="#ccc" stroke-width="0.9"/></svg>
<div class="a" style="left:6px;top:391px;width:11px;height:12px;background:#000;border:1px solid #bdbdbd;box-sizing:border-box;"></div>
<div class="a" style="left:1px;top:386px;width:10px;height:11px;background:#220c80;border:1px solid #a898d0;box-sizing:border-box;"></div>
<svg class="a" style="left:2px;top:409px" width="14" height="12" viewBox="0 0 14 12"><rect x="1.5" y="1.5" width="10" height="7" fill="none" stroke="#c0c0c0" stroke-width="1"/><circle cx="6.5" cy="5" r="1.7" fill="none" stroke="#c0c0c0" stroke-width="0.9"/></svg>
<div class="a" style="left:346px;top:157px;width:116px;height:116px;background:#ffffff;"></div>
<svg class="a" style="left:360px;top:177px" width="76" height="76">
<defs><linearGradient id="cg" x1="0" y1="0" x2="0" y2="1"><stop offset="0" stop-color="#1515b4"/><stop offset="1" stop-color="#2632f4"/></linearGradient></defs>
<circle cx="37.7" cy="37.5" r="32.2" fill="url(#cg)" stroke="#14146a" stroke-width="0.9"/>
<rect x="36.4" y="4.2" width="2.6" height="2.6" fill="#fff" stroke="#222" stroke-width="0.8"/>
<rect x="36.4" y="68.4" width="2.6" height="2.6" fill="#fff" stroke="#222" stroke-width="0.8"/>
<rect x="4.2" y="36.2" width="2.6" height="2.6" fill="#fff" stroke="#222" stroke-width="0.8"/>
<rect x="68.6" y="36.2" width="2.6" height="2.6" fill="#fff" stroke="#222" stroke-width="0.8"/>
</svg>
<div class="a" style="left:787px;top:41px;width:2px;height:383px;background:#383838;"></div>
<div class="a" style="left:789px;top:41px;width:22px;height:383px;background:#535353;"></div>
<div class="a" style="left:789px;top:41px;width:22px;height:7px;background:#474747;"></div>
<div class="a" style="left:802px;top:43px;width:2px;height:2px;background:#c8c8c8;"></div>
<div class="a" style="left:805px;top:43px;width:2px;height:2px;background:#c8c8c8;"></div>
<div class="a" style="left:811px;top:41px;width:1px;height:383px;background:#3a3a3a;"></div>
<svg class="a" style="left:794px;top:55px" width="13" height="13" viewBox="0 0 13 13"><circle cx="6.5" cy="6.5" r="2.2" fill="#d8d8d8"/><path d="M6.5 0.5v3M6.5 9.5v3M0.5 6.5h3M9.5 6.5h3M2.3 2.3l2 2M8.7 8.7l2 2M2.3 10.7l2-2M8.7 4.3l2-2" stroke="#d8d8d8" stroke-width="1"/></svg>
<svg class="a" style="left:794px;top:72px" width="14" height="10" viewBox="0 0 14 10"><path d="M0.5 9.5V7L2 4L3.5 6.5L5 2L7 6L9 1L10.5 5L12 3.5L13.5 6V9.5Z" fill="#d8d8d8"/></svg>
<div class="a" style="left:791px;top:88px;width:18px;height:1px;background:#474747;"></div>
<svg class="a" style="left:793px;top:95px" width="15" height="13" viewBox="0 0 15 13"><rect x="0.5" y="0.5" width="14" height="12" fill="#2a2a2a"/><path d="M3 3h3v2H3zM8 2.5h4M8 5h4M3 9h9" stroke="#d8d8d8" stroke-width="1.4" fill="none"/></svg>
<div class="a" style="left:791px;top:113px;width:18px;height:1px;background:#474747;"></div>
<svg class="a" style="left:794px;top:119px" width="13" height="13" viewBox="0 0 13 13"><circle cx="4" cy="4" r="3" fill="none" stroke="#d8d8d8" stroke-width="1.2"/><path d="M3 6L10 12M10 6L8 12" stroke="#d8d8d8" stroke-width="1.2"/><rect x="6" y="6" width="6" height="6" fill="none" stroke="#d8d8d8" stroke-width="1"/></svg>
<div class="a" style="left:791px;top:137px;width:18px;height:1px;background:#474747;"></div>
<svg class="a" style="left:794px;top:142px" width="13" height="12" viewBox="0 0 13 12"><path d="M3 1L4.5 5M6.5 0.5v4.5M10 1L8.5 5" stroke="#d8d8d8" stroke-width="1.2"/><rect x="4" y="6" width="5" height="6" fill="#d8d8d8"/></svg>
<svg class="a" style="left:793px;top:160px" width="14" height="11" viewBox="0 0 14 11"><path d="M4 2.5h9.5M0.5 8h8" stroke="#d8d8d8" stroke-width="1.2"/><rect x="0.5" y="0.5" width="5" height="4" fill="#d8d8d8"/><circle cx="10.5" cy="8" r="2.3" fill="#d8d8d8"/></svg>
<div class="a" style="left:791px;top:175px;width:18px;height:1px;background:#474747;"></div>
<div class="t" style="left:796px;top:200px;font-size:11px;color:#d0d0d0;font-weight:bold;">&#xB6;</div>
<div class="a" style="left:791px;top:216px;width:18px;height:1px;background:#474747;"></div>
<div class="t" style="left:795px;top:224px;font-size:12px;color:#d0d0d0;font-family:Liberation Serif,serif;font-style:italic;">A</div>
<div class="a" style="left:791px;top:240px;width:18px;height:1px;background:#474747;"></div>
<div class="a" style="left:812px;top:41px;width:140px;height:6px;background:#474747;"></div>
<div class="a" style="left:945px;top:43px;width:2px;height:2px;background:#c8c8c8;"></div>
<div class="a" style="left:948px;top:43px;width:2px;height:2px;background:#c8c8c8;"></div>
<div class="a" style="left:952px;top:41px;width:2px;height:383px;background:#3e3e3e;"></div>
<div class="a" style="left:812px;top:47px;width:140px;height:18px;background:#464646;"></div>
<div class="a" style="left:812px;top:47px;width:23px;height:18px;background:#535353;"></div>
<svg class="a" style="left:817px;top:53px" width="14" height="8"><path d="M1.7 7.5H4.3M0.8 4.5H4.9M0.0 1.5H4.1M1.5 2.5H4.4M1.0 3.5H4.8M1.5 0.1V7.7M5.5 0.8V7.7M0.1 7.5L4.9 2.9M7.1 1.5H11.3M7.3 6.5H11.1M8.2 4.5H11.3M8.2 6.5H12.1M7.4 2.5H12.7M11.5 1.5V7.3M8.5 0.2V6.2M7.6 7.5L11.2 1.1" stroke="rgb(215,215,215)" stroke-opacity="0.96" stroke-width="1" fill="none"/></svg>
<svg class="a" style="left:841px;top:53px" width="14" height="8"><path d="M0.1 7.5H4.5M1.3 7.5H4.8M0.5 4.5H4.5M0.1 6.5H4.9M2.5 1.7V6.7M2.5 2.1V7.8M7.9 4.5H12.3M7.1 6.5H12.2M8.2 1.5H11.4M10.5 2.3V6.8M10.5 0.4V6.0M12.5 0.6V7.6" stroke="rgb(215,215,215)" stroke-opacity="0.56" stroke-width="1" fill="none"/></svg>
<svg class="a" style="left:943px;top:53px" width="8" height="6" viewBox="0 0 8 6"><path d="M1 0.5h6M1 2.5h6M1 4.5h6" stroke="#8a8a8a" stroke-width="1"/></svg>
<div class="a" style="left:838px;top:68px;width:85px;height:105px;background:linear-gradient(to bottom, rgba(0,0,0,0), #000), linear-gradient(to right, #fff, #f00);"></div>
<div class="a" style="left:932px;top:67px;width:12px;height:106px;background:linear-gradient(to bottom,#f00 0%,#f0f 17%,#00f 33%,#0ff 50%,#0f0 67%,#ff0 83%,#f00 100%);"></div>
<svg class="a" style="left:835px;top:168px" width="6" height="6" viewBox="0 0 6 6"><circle cx="3" cy="3" r="2.2" fill="none" stroke="#eee" stroke-width="0.9"/></svg>
<svg class="a" style="left:927px;top:169px" width="5" height="6" viewBox="0 0 5 6"><path d="M0 3L5 0V6Z" fill="#f0f0f0"/></svg>
<div class="a" style="left:824px;top:76px;width:11px;height:11px;background:#000;border:1px solid #9a9a9a;box-sizing:border-box;"></div>
<div class="a" style="left:818px;top:70px;width:11px;height:11px;background:#250c84;border:1px solid #b8a8e0;box-sizing:border-box;"></div>
<div class="a" style="left:812px;top:177px;width:140px;height:1px;background:#3a3a3a;"></div>
<div class="a" style="left:812px;top:178px;width:140px;height:18px;background:#464646;"></div>
<div class="a" style="left:812px;top:178px;width:48px;height:18px;background:#535353;"></div>
<svg class="a" style="left:840px;top:184px" width="14" height="8"><path d="M1.7 4.5H4.8M0.6 1.5H5.6M1.6 7.5H4.5M5.5 0.1V7.5M2.5 2.2V6.8M2.5 2.1V7.4M1.1 7.5L5.1 3.3M8.0 1.5H11.9M7.8 7.5H11.8M7.8 3.5H11.6M7.4 2.5H12.2M8.2 5.5H11.9M9.5 1.7V6.0M8.5 0.4V7.4M9.5 1.3V7.6M7.4 7.5L12.7 3.2" stroke="rgb(215,215,215)" stroke-opacity="0.96" stroke-width="1" fill="none"/></svg>
<div class="a" style="left:862px;top:180px;width:83px;height:15px;background:#424242;"></div>
<svg class="a" style="left:943px;top:184px" width="8" height="6" viewBox="0 0 8 6"><path d="M1 0.5h6M1 2.5h6M1 4.5h6" stroke="#8a8a8a" stroke-width="1"/></svg>
<svg class="a" style="left:816px;top:202px" width="10" height="10" viewBox="0 0 10 10"><rect width="10" height="10" fill="#f4f4f4"/><path d="M1 1L9 9" stroke="#d02020" stroke-width="1.6"/></svg>
<svg class="a" style="left:834px;top:202px" width="10" height="10" viewBox="0 0 10 10"><rect width="10" height="10" fill="#4a4a4a"/></svg>
<svg class="a" style="left:853px;top:202px" width="10" height="10" viewBox="0 0 10 10"><rect width="10" height="10" fill="#48b8e8"/><rect x="1" y="1" width="8" height="8" fill="#6ed0f4"/></svg>
<svg class="a" style="left:872px;top:202px" width="10" height="10" viewBox="0 0 10 10"><rect width="10" height="10" fill="#8ad8f2"/></svg>
<svg class="a" style="left:890px;top:202px" width="10" height="10" viewBox="0 0 10 10"><rect width="10" height="10" fill="#c8eef6"/><rect x="2" y="2" width="6" height="6" fill="#9ad8e8"/></svg>
<svg class="a" style="left:908px;top:202px" width="10" height="10" viewBox="0 0 10 10"><rect width="10" height="10" fill="#f4f0d0"/><rect x="1" y="1" width="2" height="8" fill="#e8d040"/><rect x="4" y="1" width="2" height="8" fill="#d050a0"/><rect x="7" y="1" width="2" height="8" fill="#c0a0e0"/></svg>
<svg class="a" style="left:927px;top:202px" width="10" height="10" viewBox="0 0 10 10"><rect width="10" height="10" fill="#555"/><rect x="1" y="1" width="2" height="8" fill="#e0d040"/><rect x="4" y="1" width="2" height="8" fill="#40c0a0"/><rect x="7" y="1" width="2" height="8" fill="#e040c0"/></svg>
<svg class="a" style="left:816px;top:220px" width="10" height="10" viewBox="0 0 10 10"><rect width="10" height="10" fill="#222"/><rect x="1" y="1" width="2.7" height="8" fill="#f0e040"/><rect x="3.7" y="1" width="2.7" height="8" fill="#f0f0f0"/><rect x="6.4" y="1" width="2.7" height="8" fill="#b040c0"/></svg>
<svg class="a" style="left:834px;top:220px" width="10" height="10" viewBox="0 0 10 10"><defs><radialGradient id="rw" cx="0.3" cy="0.3" r="0.8"><stop offset="0" stop-color="#fff"/><stop offset="0.5" stop-color="#e84050"/><stop offset="1" stop-color="#901020"/></radialGradient></defs><rect width="10" height="10" fill="url(#rw)"/></svg>
<svg class="a" style="left:853px;top:220px" width="10" height="10" viewBox="0 0 10 10"><rect width="10" height="10" fill="#585858"/></svg>
<svg class="a" style="left:872px;top:220px" width="10" height="10" viewBox="0 0 10 10"><rect width="10" height="10" fill="#565656"/></svg>
<svg class="a" style="left:890px;top:220px" width="10" height="10" viewBox="0 0 10 10"><rect width="10" height="10" fill="#575757"/></svg>
<svg class="a" style="left:908px;top:220px" width="10" height="10" viewBox="0 0 10 10"><defs><radialGradient id="mg"><stop offset="0" stop-color="#ff3070"/><stop offset="0.6" stop-color="#a01050"/><stop offset="1" stop-color="#200818"/></radialGradient></defs><rect width="10" height="10" fill="url(#mg)"/></svg>
<svg class="a" style="left:926px;top:219px" width="12" height="12" viewBox="0 0 12 12"><rect x="1" y="1" width="10" height="10" fill="#4e4e4e" stroke="#d8d8d8" stroke-width="1.6" rx="1"/></svg>
<svg class="a" style="left:816px;top:239px" width="10" height="10" viewBox="0 0 10 10"><rect width="10" height="10" fill="#111"/><path d="M2 1h6L5 5Z" fill="#e06070"/><rect x="1" y="6" width="8" height="3" fill="#333"/></svg>
<svg class="a" style="left:834px;top:239px" width="10" height="10" viewBox="0 0 10 10"><defs><linearGradient id="bg2" x1="0" y1="0" x2="1" y2="1"><stop offset="0" stop-color="#a8d8f8"/><stop offset="0.5" stop-color="#3890e0"/><stop offset="1" stop-color="#1060b0"/></linearGradient></defs><rect width="10" height="10" fill="url(#bg2)"/></svg>
<svg class="a" style="left:853px;top:239px" width="10" height="10" viewBox="0 0 10 10"><rect width="10" height="10" fill="#9a9a9a"/></svg>
<svg class="a" style="left:872px;top:239px" width="10" height="10" viewBox="0 0 10 10"><rect width="10" height="10" fill="#3a3a3a"/><path d="M1 3h8M1 7h8" stroke="#ddd" stroke-width="1"/></svg>
<svg class="a" style="left:890px;top:239px" width="10" height="10" viewBox="0 0 10 10"><rect width="10" height="10" fill="#6e6040"/></svg>
<svg class="a" style="left:908px;top:239px" width="10" height="10" viewBox="0 0 10 10"><defs><linearGradient id="gd" x1="0" y1="0" x2="0" y2="1"><stop offset="0" stop-color="#5a4a20"/><stop offset="0.5" stop-color="#c8a860"/><stop offset="1" stop-color="#7a6030"/></linearGradient></defs><rect width="10" height="10" fill="url(#gd)"/></svg>
<svg class="a" style="left:927px;top:239px" width="10" height="10" viewBox="0 0 10 10"><rect width="10" height="10" fill="#c03050"/><rect y="3" width="10" height="2" fill="#f090a0"/><rect y="7" width="10" height="1" fill="#802040"/></svg>
<div class="a" style="left:945px;top:199px;width:7px;height:64px;background:#4a4a4a;"></div>
<div class="a" style="left:946px;top:202px;width:5px;height:33px;background:#6a6a6a;"></div>
<svg class="a" style="left:893px;top:254px" width="10" height="10" viewBox="0 0 10 10"><circle cx="5" cy="5" r="4" fill="none" stroke="#b0b0b0" stroke-width="1.1"/><path d="M5 2.5v3h2" stroke="#b0b0b0" stroke-width="1"/></svg>
<svg class="a" style="left:911px;top:255px" width="10" height="9" viewBox="0 0 10 9"><rect x="2" y="2" width="7" height="6.5" fill="none" stroke="#b0b0b0"/><rect x="0.5" y="0.5" width="5" height="4" fill="#b0b0b0"/></svg>
<svg class="a" style="left:929px;top:254px" width="9" height="10" viewBox="0 0 9 10"><path d="M1 2h7M3 1h3M2 3v6h5V3" fill="none" stroke="#a0a0a0" stroke-width="1.1"/></svg>
<div class="a" style="left:812px;top:266px;width:140px;height:1px;background:#3a3a3a;"></div>
<div class="a" style="left:812px;top:267px;width:140px;height:17px;background:#464646;"></div>
<div class="a" style="left:812px;top:267px;width:37px;height:17px;background:#535353;"></div>
<svg class="a" style="left:816px;top:272px" width="28" height="8"><path d="M1.1 2.5H5.5M0.3 2.5H5.3M0.5 3.5H5.6M2.5 2.1V6.9M1.5 2.1V7.0M2.0 7.5L3.8 1.1M7.7 5.5H11.5M7.7 7.5H11.8M7.7 6.5H12.4M8.5 6.5H11.5M11.5 1.5V6.9M9.5 1.5V7.8M8.6 7.5L12.0 2.9M14.8 6.5H19.8M14.9 7.5H18.6M15.6 7.5H19.2M15.4 1.5H18.2M15.5 1.3V7.6M18.5 2.3V6.8M15.1 7.5L18.5 3.2M22.4 1.5H26.2M22.3 3.5H26.0M21.3 7.5H25.9M22.3 7.5H25.7M21.4 5.5H26.1M22.5 1.0V7.0M25.5 0.8V7.4M22.5 7.5L26.6 2.6" stroke="rgb(215,215,215)" stroke-opacity="0.96" stroke-width="1" fill="none"/></svg>
<svg class="a" style="left:855px;top:272px" width="14" height="8"><path d="M1.7 7.5H5.0M1.6 2.5H5.7M0.3 6.5H4.7M4.5 0.4V6.4M4.5 1.9V7.0M8.4 5.5H12.0M7.4 6.5H11.6M8.7 5.5H11.6M8.4 4.5H11.4M8.1 3.5H12.2M10.5 1.5V6.4M9.5 2.2V5.9M8.5 2.0V5.8" stroke="rgb(215,215,215)" stroke-opacity="0.56" stroke-width="1" fill="none"/></svg>
<svg class="a" style="left:943px;top:273px" width="8" height="6" viewBox="0 0 8 6"><path d="M1 0.5h6M1 2.5h6M1 4.5h6" stroke="#8a8a8a" stroke-width="1"/></svg>
<svg class="a" style="left:814px;top:291px" width="10" height="10" viewBox="0 0 10 10"><path d="M1 9L8 2" stroke="#d8d8d8" stroke-width="1.5"/><path d="M1 4L3 6M7 1l2 2" stroke="#d8d8d8" stroke-width="1"/></svg>
<div class="a" style="left:827px;top:289px;width:18px;height:18px;background:#ffffff;"></div>
<svg class="a" style="left:848px;top:293px" width="21" height="8"><path d="M0.6 4.5H4.8M0.4 5.5H5.7M1.1 3.5H4.8M1.5 1.1V6.1M2.5 1.0V6.7M8.4 5.5H11.6M8.4 7.5H11.3M8.2 2.5H11.9M7.8 6.5H11.3M7.5 4.5H12.4M10.5 1.3V6.8M12.5 1.7V7.4M8.2 7.5L12.1 1.5M15.0 4.5H18.6M14.7 6.5H19.1M14.1 7.5H18.7M14.0 5.5H18.7M18.5 0.2V6.8M18.5 0.3V7.5M16.5 0.3V7.8" stroke="rgb(215,215,215)" stroke-opacity="0.80" stroke-width="1" fill="none"/></svg>
<div class="t" style="left:868px;top:292px;font-size:8px;color:#dcdcdc;">-1</div>
<div class="a" style="left:812px;top:309px;width:132px;height:1px;background:#474747;"></div>
<div class="a" style="left:812px;top:323px;width:132px;height:1px;background:#484848;"></div>
<svg class="a" style="left:830px;top:314px" width="9" height="9" viewBox="0 0 9 9"><path d="M0.5 1.5h3l1-1h3.5v8h-7.5z" fill="none" stroke="#d8d8d8" stroke-width="1"/><rect x="2.5" y="3.5" width="4" height="3.5" fill="#9a9a9a" stroke="#d8d8d8" stroke-width="0.8"/></svg>
<svg class="a" style="left:846px;top:315px" width="13" height="8"><path d="M0.8 4.5H4.1M0.7 2.5H4.6M1.3 4.5H4.8M0.6 6.5H4.5M4.5 0.8V7.5M3.5 0.3V7.5M4.5 0.3V5.7M2.0 7.5L3.9 2.7M6.6 4.5H11.3M6.8 1.5H10.3M7.5 5.5H10.5M7.5 7.5H10.8M8.5 1.6V6.9M10.5 0.2V7.6M8.0 7.5L11.6 3.0" stroke="rgb(215,215,215)" stroke-opacity="0.88" stroke-width="1" fill="none"/></svg>
<div class="a" style="left:812px;top:336px;width:132px;height:1px;background:#484848;"></div>
<svg class="a" style="left:830px;top:327px" width="9" height="9" viewBox="0 0 9 9"><path d="M0.5 1.5h3l1-1h3.5v8h-7.5z" fill="none" stroke="#d8d8d8" stroke-width="1"/><rect x="2.5" y="3.5" width="4" height="3.5" fill="#9a9a9a" stroke="#d8d8d8" stroke-width="0.8"/></svg>
<svg class="a" style="left:846px;top:328px" width="26" height="8"><path d="M0.2 7.5H4.8M1.4 5.5H5.0M0.0 1.5H4.4M1.5 5.5H4.5M4.5 1.9V7.0M3.5 1.0V7.8M8.0 5.5H10.2M7.2 4.5H11.6M6.8 5.5H11.6M6.5 1.5H10.7M8.0 1.5H11.7M8.5 0.0V6.3M8.5 1.8V7.6M8.0 7.5L11.1 3.6M13.5 6.5H17.4M14.1 4.5H16.9M13.1 7.5H18.2M14.4 1.5H17.2M13.6 5.5H17.8M18.5 2.0V6.5M15.5 2.3V6.3M13.3 7.5L18.2 1.4M20.8 2.5H24.0M20.2 6.5H24.4M20.0 6.5H24.4M20.5 5.5H23.5M20.9 5.5H23.6M24.5 1.4V7.3M22.5 2.1V7.1" stroke="rgb(215,215,215)" stroke-opacity="0.88" stroke-width="1" fill="none"/></svg>
<div class="a" style="left:812px;top:349px;width:132px;height:1px;background:#484848;"></div>
<svg class="a" style="left:830px;top:340px" width="9" height="9" viewBox="0 0 9 9"><path d="M0.5 1.5h3l1-1h3.5v8h-7.5z" fill="none" stroke="#d8d8d8" stroke-width="1"/><rect x="2.5" y="3.5" width="4" height="3.5" fill="#9a9a9a" stroke="#d8d8d8" stroke-width="0.8"/></svg>
<svg class="a" style="left:846px;top:341px" width="32" height="8"><path d="M0.4 6.5H4.6M0.5 5.5H4.9M1.5 2.5H4.1M0.5 6.5H5.1M1.6 7.5H5.1M2.5 0.2V6.7M4.5 0.5V6.2M5.5 0.6V6.5M8.0 5.5H10.9M7.1 1.5H10.9M7.1 4.5H11.7M7.3 3.5H11.4M9.5 1.4V7.5M8.5 0.4V6.3M9.5 1.4V7.0M14.5 2.5H17.5M13.6 7.5H17.6M13.5 1.5H18.3M16.5 0.0V7.9M18.5 2.1V6.8M16.5 0.6V6.1M14.9 7.5L17.8 3.5M19.6 2.5H24.5M19.6 2.5H24.7M20.9 4.5H24.1M24.5 1.5V5.8M23.5 0.2V7.2M19.7 7.5L24.6 2.5M26.3 4.5H29.8M26.4 7.5H31.2M26.6 2.5H29.9M30.5 0.1V6.1M30.5 1.6V5.6M26.3 7.5L30.7 3.8" stroke="rgb(215,215,215)" stroke-opacity="0.88" stroke-width="1" fill="none"/></svg>
<div class="a" style="left:812px;top:362px;width:132px;height:1px;background:#484848;"></div>
<svg class="a" style="left:830px;top:353px" width="9" height="9" viewBox="0 0 9 9"><path d="M0.5 1.5h3l1-1h3.5v8h-7.5z" fill="none" stroke="#d8d8d8" stroke-width="1"/><rect x="2.5" y="3.5" width="4" height="3.5" fill="#9a9a9a" stroke="#d8d8d8" stroke-width="0.8"/></svg>
<svg class="a" style="left:846px;top:354px" width="32" height="8"><path d="M0.9 6.5H4.6M0.7 5.5H4.7M0.6 3.5H4.7M1.3 4.5H3.8M0.7 7.5H3.8M1.5 2.0V7.8M3.5 0.9V6.2M7.1 7.5H11.8M8.0 1.5H11.3M6.7 2.5H11.2M8.5 0.1V6.3M9.5 0.3V5.9M8.5 1.0V7.6M8.2 7.5L10.3 1.5M13.7 1.5H17.5M13.8 2.5H17.3M14.5 6.5H17.4M13.2 6.5H17.1M15.5 0.6V7.4M15.5 0.9V7.0M14.5 2.0V5.7M14.3 7.5L17.0 2.5M19.5 1.5H23.5M19.8 4.5H24.1M19.8 7.5H23.9M19.8 1.5H23.6M19.8 5.5H24.7M24.5 1.8V6.2M21.5 0.3V6.4M26.3 5.5H31.2M26.6 6.5H30.2M27.3 1.5H30.8M27.5 1.0V6.2M27.5 1.6V7.4M29.5 2.4V7.9" stroke="rgb(215,215,215)" stroke-opacity="0.88" stroke-width="1" fill="none"/></svg>
<div class="a" style="left:813px;top:363px;width:131px;height:14px;background:#6b6b6b;"></div>
<svg class="a" style="left:830px;top:366px" width="9" height="9" viewBox="0 0 9 9"><path d="M0.5 1.5h3l1-1h3.5v8h-7.5z" fill="none" stroke="#d8d8d8" stroke-width="1"/><rect x="2.5" y="3.5" width="4" height="3.5" fill="#9a9a9a" stroke="#d8d8d8" stroke-width="0.8"/></svg>
<svg class="a" style="left:846px;top:367px" width="52" height="8"><path d="M0.0 5.5H4.5M0.8 4.5H5.1M1.3 6.5H3.9M1.1 3.5H4.7M0.1 6.5H3.9M2.5 0.1V6.1M1.5 0.6V7.8M3.5 0.4V7.3M8.0 1.5H10.6M7.8 2.5H10.8M6.9 4.5H11.1M11.5 1.7V7.9M8.5 1.2V6.8M8.5 0.3V7.0M7.7 7.5L11.5 1.4M13.6 4.5H16.8M14.0 1.5H17.2M14.0 5.5H18.2M13.1 7.5H17.7M14.3 3.5H17.2M17.5 2.0V7.9M16.5 2.3V5.8M15.5 1.0V6.5M14.1 7.5L16.2 2.3M19.9 5.5H24.1M21.1 3.5H24.1M21.1 1.5H23.3M20.9 1.5H23.8M20.5 7.5H23.8M23.5 0.6V6.8M22.5 2.3V7.3M20.8 7.5L22.8 2.8M26.1 7.5H30.4M26.7 7.5H30.5M27.5 7.5H30.4M27.2 2.5H30.1M26.7 3.5H30.2M29.5 0.5V6.3M28.5 1.3V6.5M26.6 7.5L29.6 1.7M34.0 4.5H37.2M32.8 7.5H36.3M33.0 3.5H37.4M32.8 7.5H37.7M33.4 1.5H36.8M35.5 0.1V7.1M35.5 1.8V7.7M34.5 2.3V6.2M33.2 7.5L36.3 3.0M39.4 5.5H43.0M40.4 1.5H42.8M39.4 7.5H43.3M40.1 5.5H43.6M39.7 1.5H43.4M42.5 2.3V6.6M41.5 1.9V5.9M46.6 6.5H50.3M46.1 3.5H50.0M46.5 5.5H50.8M47.1 6.5H50.2M47.5 0.7V7.7M48.5 1.4V7.8M50.5 0.8V6.0" stroke="rgb(215,215,215)" stroke-opacity="0.88" stroke-width="1" fill="none"/></svg>
<div class="a" style="left:944px;top:284px;width:8px;height:94px;background:#4b4b4b;"></div>
<div class="a" style="left:812px;top:378px;width:140px;height:1px;background:#474747;"></div>
<div class="a" style="left:812px;top:379px;width:140px;height:17px;background:#4e4e4e;"></div>
<svg class="a" style="left:893px;top:384px" width="12" height="10" viewBox="0 0 12 10"><rect x="1" y="3" width="8" height="6" fill="#c8c8c8"/><path d="M4 1h6v6" fill="none" stroke="#c8c8c8"/></svg>
<svg class="a" style="left:911px;top:384px" width="11" height="10" viewBox="0 0 11 10"><rect x="0.5" y="2.5" width="10" height="7" rx="1" fill="#d0d0d0"/><circle cx="5.5" cy="6" r="2" fill="#535353"/><rect x="3.5" y="0.5" width="4" height="2" fill="#d0d0d0"/></svg>
<svg class="a" style="left:929px;top:384px" width="9" height="10" viewBox="0 0 9 10"><path d="M1 2h7M3 1h3M2 3v6h5V3" fill="none" stroke="#b0b0b0" stroke-width="1.1"/></svg>
<div class="a" style="left:812px;top:396px;width:140px;height:1px;background:#3a3a3a;"></div>
<div class="a" style="left:812px;top:397px;width:140px;height:17px;background:#464646;"></div>
<div class="a" style="left:812px;top:397px;width:25px;height:17px;background:#535353;"></div>
<svg class="a" style="left:815px;top:402px" width="14" height="8"><path d="M0.7 2.5H4.2M0.1 1.5H4.8M1.6 4.5H4.5M1.7 4.5H4.9M2.5 0.9V6.6M2.5 2.3V6.4M3.5 0.2V7.1M1.1 7.5L4.6 3.6M7.8 4.5H11.7M7.6 7.5H11.9M7.3 6.5H12.2M8.4 7.5H11.9M11.5 0.7V7.2M12.5 1.2V5.7" stroke="rgb(215,215,215)" stroke-opacity="0.96" stroke-width="1" fill="none"/></svg>
<svg class="a" style="left:840px;top:402px" width="14" height="8"><path d="M0.9 3.5H4.9M0.3 2.5H4.7M0.6 5.5H4.1M0.1 5.5H5.1M0.5 6.5H4.6M5.5 1.0V7.8M1.5 0.1V7.6M8.1 2.5H11.9M8.0 7.5H12.1M7.3 1.5H11.5M7.2 1.5H12.5M8.4 4.5H11.7M11.5 1.6V6.6M8.5 0.6V7.3M8.3 7.5L12.4 3.8" stroke="rgb(215,215,215)" stroke-opacity="0.56" stroke-width="1" fill="none"/></svg>
<svg class="a" style="left:864px;top:402px" width="14" height="8"><path d="M0.8 3.5H5.1M1.5 1.5H4.8M0.8 7.5H4.7M2.5 0.4V6.6M1.5 0.0V5.9M0.8 7.5L3.7 3.7M7.7 2.5H11.5M7.5 2.5H11.3M8.4 4.5H12.4M8.5 0.9V8.0M12.5 1.0V7.1M8.7 7.5L10.9 3.0" stroke="rgb(215,215,215)" stroke-opacity="0.56" stroke-width="1" fill="none"/></svg>
<svg class="a" style="left:943px;top:403px" width="8" height="6" viewBox="0 0 8 6"><path d="M1 0.5h6M1 2.5h6M1 4.5h6" stroke="#8a8a8a" stroke-width="1"/></svg>
<div class="a" style="left:815px;top:416px;width:42px;height:10px;background:#464646;"></div>
<svg class="a" style="left:818px;top:418px" width="6" height="6" viewBox="0 0 6 6"><circle cx="3" cy="3" r="2" fill="none" stroke="#ccc"/></svg>
<svg class="a" style="left:825px;top:418px" width="12" height="7"><path d="M1.3 3.5H4.0M0.7 3.5H4.3M0.4 3.5H4.8M1.5 0.3V6.6M3.5 1.7V5.8M1.6 6.5L3.4 2.1M6.5 5.5H9.4M7.4 2.5H10.1M6.7 2.5H10.6M9.5 0.9V4.9M9.5 0.8V5.9M7.5 1.6V5.6M7.7 6.5L10.3 3.3" stroke="rgb(215,215,215)" stroke-opacity="0.80" stroke-width="1" fill="none"/></svg>
<div class="a" style="left:873px;top:418px;width:6px;height:6px;border:1px solid #aaa;box-sizing:border-box;"></div>
<div class="a" style="left:887px;top:418px;width:6px;height:6px;border:1px solid #aaa;box-sizing:border-box;"></div>
<div class="a" style="left:900px;top:418px;width:6px;height:6px;border:1px solid #aaa;box-sizing:border-box;"></div>
<div class="a" style="left:914px;top:418px;width:6px;height:6px;border:1px solid #aaa;box-sizing:border-box;"></div>
<div class="a" style="left:928px;top:418px;width:6px;height:6px;border:1px solid #aaa;box-sizing:border-box;"></div>
<div class="a" style="left:944px;top:417px;width:5px;height:7px;background:#d0d0d0;"></div>
<div class="a" style="left:954px;top:41px;width:27px;height:6px;background:#474747;"></div>
<div class="a" style="left:954px;top:47px;width:27px;height:24px;background:#575757;"></div>
<div class="a" style="left:954px;top:71px;width:27px;height:1px;background:#3a3a3a;"></div>
<svg class="a" style="left:959px;top:56px" width="15" height="12" viewBox="0 0 15 12"><ellipse cx="7.5" cy="6" rx="6.5" ry="5" fill="#d8d8d8"/><path d="M4 6.5c1-3 5-3 7 0" fill="none" stroke="#777" stroke-width="1"/><circle cx="7.5" cy="6" r="2" fill="none" stroke="#777" stroke-width="0.8"/></svg>
<svg class="a" style="left:977px;top:58px" width="7" height="8"><path d="M1.0 5.5H5.3M0.1 3.5H5.5M0.6 6.5H4.6M1.5 2.2V6.1M4.5 0.5V6.3M0.6 7.5L5.3 2.2" stroke="rgb(215,215,215)" stroke-opacity="0.80" stroke-width="1" fill="none"/></svg>
<div class="a" style="left:41px;top:41px;width:140px;height:180px;background:#535353;box-shadow:0 1px 4px rgba(0,0,0,.55);"></div>
<div class="a" style="left:41px;top:41px;width:1px;height:180px;background:#5a5a5a;"></div>
<div class="a" style="left:53px;top:47px;width:18px;height:13px;background:#464646;"></div>
<div class="a" style="left:76px;top:47px;width:18px;height:13px;background:#464646;"></div>
<div class="a" style="left:98px;top:47px;width:18px;height:13px;background:#464646;"></div>
<div class="a" style="left:121px;top:47px;width:18px;height:13px;background:#464646;"></div>
<svg class="a" style="left:55px;top:48px" width="14" height="11" viewBox="0 0 14 11"><rect x="0" y="0" width="14" height="11" fill="#f4f4f4" stroke="#777" stroke-width="0.6"/><path d="M1.5 10L12.5 1" stroke="#333" stroke-width="1"/></svg>
<svg class="a" style="left:78px;top:48px" width="14" height="11" viewBox="0 0 14 11"><rect x="0.6" y="0.6" width="12.8" height="9.8" fill="#060606" stroke="#b0b0b0" stroke-width="1.2"/></svg>
<svg class="a" style="left:100px;top:48px" width="14" height="11" viewBox="0 0 14 11"><defs><linearGradient id="bw"><stop offset="0" stop-color="#111"/><stop offset="1" stop-color="#f4f4f4"/></linearGradient></defs><rect x="0.6" y="0.6" width="12.8" height="9.8" fill="url(#bw)" stroke="#a0a0a0" stroke-width="1.2"/></svg>
<svg class="a" style="left:123px;top:48px" width="14" height="11" viewBox="0 0 14 11"><defs><clipPath id="cp4"><rect x="0" y="0" width="14" height="11"/></clipPath></defs><rect x="0" y="0" width="14" height="11" fill="#f2f2f2"/><g clip-path="url(#cp4)"><path d="M-2 9L7 -2M2 12L12 -1M6 13L16 1M10 14L18 5" stroke="#1a1a1a" stroke-width="1.6"/></g></svg>
<svg class="a" style="left:160px;top:47px" width="14" height="13" viewBox="0 0 14 13"><defs><linearGradient id="rb" x1="0" y1="1" x2="1" y2="0"><stop offset="0" stop-color="#40c0f0"/><stop offset="0.35" stop-color="#50f070"/><stop offset="0.6" stop-color="#f0f060"/><stop offset="1" stop-color="#f05080"/></linearGradient></defs><rect x="0.8" y="0.8" width="12.4" height="11.4" fill="url(#rb)" stroke="#f8f8f8" stroke-width="1.6"/></svg>
<svg class="a" style="left:51px;top:77px" width="14" height="8"><path d="M1.6 3.5H4.5M1.5 7.5H5.6M0.1 2.5H4.6M0.6 5.5H5.1M2.5 2.0V7.2M4.5 0.4V7.7M5.5 1.8V6.3M0.1 7.5L3.5 1.6M8.3 2.5H11.8M8.6 5.5H11.8M7.9 2.5H11.9M8.2 7.5H11.8M8.5 1.8V6.4M12.5 2.1V6.6" stroke="rgb(215,215,215)" stroke-opacity="0.88" stroke-width="1" fill="none"/></svg>
<svg class="a" style="left:159px;top:76px" width="9" height="8" viewBox="0 0 9 8"><circle cx="3.5" cy="3.5" r="2" fill="none" stroke="#e0e0e0" stroke-width="2"/><path d="M7 6l1.5 0" stroke="#ccc"/></svg>
<div class="a" style="left:51px;top:89px;width:19px;height:19px;background:linear-gradient(135deg,#20108a 0%,#000 100%);"></div>
<div class="a" style="left:69px;top:89px;width:19px;height:19px;background:linear-gradient(135deg,rgba(30,16,140,1) 0%,rgba(30,16,140,0) 100%),repeating-conic-gradient(#ccc 0 25%,#fff 0 50%) 0 0/6px 6px;"></div>
<div class="a" style="left:88px;top:89px;width:19px;height:19px;background:linear-gradient(135deg,#000 0%,#fff 100%);"></div>
<div class="a" style="left:107px;top:89px;width:19px;height:19px;background:linear-gradient(135deg,#e00000 0%,#e00000 35%,#007000 75%,#007000 100%);"></div>
<div class="a" style="left:125px;top:89px;width:19px;height:19px;background:linear-gradient(135deg,#2a0860 0%,#a04010 50%,#f08000 100%);"></div>
<div class="a" style="left:143px;top:89px;width:18px;height:19px;background:linear-gradient(135deg,#0000b0 0%,#f00000 50%,#ffe000 100%);"></div>
<div class="a" style="left:51px;top:108px;width:19px;height:19px;background:linear-gradient(135deg,#0000a0 0%,#0000a0 25%,#f0e020 45%,#f0e020 55%,#0000a0 75%,#0000a0 100%);"></div>
<div class="a" style="left:69px;top:108px;width:19px;height:19px;background:linear-gradient(135deg,#f06000 0%,#ffe000 50%,#f06000 100%);"></div>
<div class="a" style="left:88px;top:108px;width:19px;height:19px;background:linear-gradient(135deg,#600890 0%,#008000 50%,#f08000 100%);"></div>
<div class="a" style="left:107px;top:108px;width:19px;height:19px;background:linear-gradient(135deg,#f0e000 0%,#f0e000 20%,#8a1a80 40%,#f08000 60%,#1020a0 80%,#1020a0 100%);"></div>
<div class="a" style="left:125px;top:108px;width:19px;height:19px;background:linear-gradient(135deg,#903010 0%,#f0c0a0 40%,#702010 65%,#f0e0d0 100%);"></div>
<div class="a" style="left:143px;top:108px;width:18px;height:19px;background:linear-gradient(135deg,#3090d0 0%,#e8f4ff 45%,#605020 60%,#f0d060 75%,#fff 100%);"></div>
<div class="a" style="left:164px;top:89px;width:7px;height:38px;background:#4a4a4a;"></div>
<div class="a" style="left:165px;top:97px;width:5px;height:20px;background:#606060;"></div>
<svg class="a" style="left:51px;top:133px" width="32" height="8"><path d="M0.1 5.5H4.8M0.5 6.5H3.8M1.2 3.5H3.7M2.5 0.2V5.7M2.5 2.2V6.3M7.3 5.5H10.7M7.6 2.5H10.5M7.3 6.5H11.5M7.8 7.5H10.9M6.8 2.5H10.6M9.5 0.6V7.9M9.5 1.0V7.5M6.8 7.5L11.1 3.0M13.0 5.5H17.2M14.0 1.5H17.2M14.1 1.5H17.4M15.5 2.0V6.7M17.5 0.4V6.4M20.1 6.5H24.5M19.5 5.5H24.0M20.9 1.5H24.3M20.0 1.5H23.3M21.5 1.1V7.1M21.5 0.2V8.0M27.1 1.5H29.7M26.2 4.5H30.5M26.3 4.5H30.4M27.5 1.5H30.3M29.5 0.2V6.2M27.5 0.9V7.7M28.5 2.3V6.7" stroke="rgb(215,215,215)" stroke-opacity="0.80" stroke-width="1" fill="none"/></svg>
<div class="t" style="left:84px;top:133px;font-size:8px;color:#dcdcdc;">:</div>
<div class="a" style="left:84px;top:142px;width:34px;height:1px;background:#4a4a4a;"></div>
<div class="t" style="left:121px;top:133px;font-size:7px;color:#aaa;">%</div>
<svg class="a" style="left:51px;top:144px" width="8" height="10" viewBox="0 0 8 10"><path d="M0.5 0.5h7v6L4 9.5L0.5 6.5Z" fill="#111" stroke="#eee" stroke-width="1"/></svg>
<svg class="a" style="left:164px;top:144px" width="8" height="10" viewBox="0 0 8 10"><path d="M0.5 0.5h7v6L4 9.5L0.5 6.5Z" fill="#111" stroke="#eee" stroke-width="1"/></svg>
<div class="a" style="left:54px;top:154px;width:114px;height:14px;background:linear-gradient(90deg,#2030f0,#1a18c8);"></div>
<svg class="a" style="left:51px;top:169px" width="8" height="10" viewBox="0 0 8 10"><path d="M4 0.5L7.5 3.5v6h-7v-6Z" fill="#d8d8e8" stroke="#aaa" stroke-width="0.8"/><rect x="2" y="4.5" width="4" height="3.5" fill="#20108a"/></svg>
<svg class="a" style="left:164px;top:169px" width="8" height="10" viewBox="0 0 8 10"><path d="M4 0.5L7.5 3.5v6h-7v-6Z" fill="#c8c8d8" stroke="#aaa" stroke-width="0.8"/><rect x="2" y="4.5" width="4" height="3.5" fill="#20108a"/></svg>
<div class="a" style="left:51px;top:184px;width:59px;height:10px;background:#474747;"></div>
<svg class="a" style="left:103px;top:187px" width="6" height="4" viewBox="0 0 6 4"><path d="M0.5 0.5L3 3L5.5 0.5" fill="none" stroke="#aaa" stroke-width="0.9"/></svg>
<div class="t" style="left:114px;top:185px;font-size:7px;color:#dcdcdc;">90</div>
<div class="a" style="left:113px;top:194px;width:25px;height:1px;background:#4a4a4a;"></div>
<svg class="a" style="left:140px;top:181px" width="16" height="16" viewBox="0 0 16 16"><circle cx="8" cy="8" r="6.8" fill="none" stroke="#c8c8c8" stroke-width="0.9"/><path d="M8 8V3.5" stroke="#c8c8c8" stroke-width="1"/></svg>
<svg class="a" style="left:159px;top:183px" width="11" height="11" viewBox="0 0 11 11"><path d="M1 1h4v4H1zM1 6h4v4H1z" fill="none" stroke="#ddd" stroke-width="1"/><path d="M6 2h4M6 5h4M6 8h4" stroke="#ddd" stroke-width="1.3"/></svg>
<svg class="a" style="left:51px;top:202px" width="14" height="8"><path d="M1.4 2.5H4.4M0.6 6.5H5.5M0.6 6.5H5.2M0.6 4.5H4.4M0.1 2.5H4.8M5.5 2.3V6.8M3.5 0.4V7.3M3.5 0.2V6.3M0.9 7.5L5.7 1.3M7.8 6.5H12.4M7.1 3.5H11.7M7.9 6.5H12.6M11.5 1.2V7.0M9.5 1.1V6.4" stroke="rgb(215,215,215)" stroke-opacity="0.80" stroke-width="1" fill="none"/></svg>
<div class="t" style="left:66px;top:202px;font-size:8px;color:#dcdcdc;">:</div>
<div class="t" style="left:74px;top:202px;font-size:7px;color:#dcdcdc;">100</div>
<div class="a" style="left:72px;top:211px;width:24px;height:1px;background:#4a4a4a;"></div>
<svg class="a" style="left:96px;top:205px" width="6" height="4" viewBox="0 0 6 4"><path d="M0.5 0.5L3 3L5.5 0.5" fill="none" stroke="#aaa" stroke-width="0.9"/></svg>
<div class="t" style="left:105px;top:202px;font-size:7px;color:#aaa;">%</div>
<div class="a" style="left:116px;top:201px;width:9px;height:9px;background:#e8e8e8;"></div>
<svg class="a" style="left:116px;top:201px" width="9" height="9" viewBox="0 0 9 9"><path d="M2 4.5L4 6.5L7.5 2" fill="none" stroke="#222" stroke-width="1.6"/></svg>
<svg class="a" style="left:128px;top:202px" width="34" height="8"><path d="M0.5 2.5H4.8M0.6 4.5H5.2M0.5 1.5H4.7M1.5 7.5H4.1M1.6 7.5H4.5M4.5 0.8V6.4M3.5 1.0V7.1M7.3 3.5H10.7M7.0 1.5H11.1M6.8 4.5H11.1M10.5 2.3V7.1M8.5 1.1V7.4M8.5 2.3V7.5M13.8 7.5H18.7M13.8 4.5H18.1M13.8 4.5H18.0M17.5 2.2V6.6M18.5 1.6V6.1M14.4 7.5L17.7 3.5M21.7 5.5H24.7M21.2 4.5H24.7M20.4 7.5H24.8M21.5 1.9V7.9M22.5 0.9V8.0M27.0 4.5H32.1M26.9 7.5H30.7M27.0 2.5H31.1M28.5 1.8V7.2M31.5 1.6V6.0M28.5 0.9V6.2" stroke="rgb(215,215,215)" stroke-opacity="0.88" stroke-width="1" fill="none"/></svg>
<svg class="a" style="left:176px;top:216px" width="4" height="4" viewBox="0 0 4 4"><path d="M0 4L4 0V4Z" fill="#6a6a6a"/></svg>
<div class="a" style="left:795px;top:183px;width:43px;height:15px;background:#f2f2f2;border:1px solid #a0a0a0;box-sizing:border-box;"></div>
<svg class="a" style="left:800px;top:187px" width="34" height="8"><path d="M1.8 4.5H6.5M0.7 3.5H6.0M2.0 1.5H6.8M1.5 3.5H7.3M1.0 7.5H5.6M1.5 1.9V7.6M4.5 0.7V6.4M3.5 0.3V5.9M9.1 6.5H14.8M10.7 1.5H14.7M8.6 4.5H14.0M9.9 1.5H14.4M10.3 5.5H13.7M11.5 2.1V6.5M9.5 0.8V7.5M15.5 1.4V7.9M9.2 7.5L13.5 2.7M17.7 7.5H23.6M17.5 4.5H23.8M18.3 7.5H22.9M17.3 6.5H23.5M21.5 0.6V6.6M21.5 2.3V5.6M18.1 7.5L23.3 3.6M26.9 5.5H32.0M27.2 2.5H30.9M27.0 7.5H32.1M27.1 6.5H31.7M28.5 1.3V7.0M26.5 0.8V7.2" stroke="rgb(95,95,95)" stroke-opacity="0.96" stroke-width="1" fill="none"/></svg>
<div class="a" style="left:622px;top:87px;width:1px;height:218px;background:#4a4a4a;"></div>
<div class="a" style="left:623px;top:88px;width:164px;height:217px;background:#535353;box-shadow:0 1px 4px rgba(0,0,0,.55);"></div>
<div class="a" style="left:623px;top:88px;width:164px;height:18px;background:#464646;"></div>
<div class="a" style="left:623px;top:88px;width:24px;height:18px;background:#535353;"></div>
<svg class="a" style="left:627px;top:94px" width="14" height="8"><path d="M1.6 4.5H4.4M0.3 7.5H5.4M1.2 7.5H5.1M1.3 3.5H4.2M1.5 1.7V7.4M3.5 1.6V5.7M0.4 7.5L5.6 2.8M8.7 5.5H12.2M7.7 6.5H11.3M7.8 1.5H11.2M7.4 2.5H12.8M11.5 0.6V8.0M8.5 1.1V5.9M8.0 7.5L10.3 1.7" stroke="rgb(215,215,215)" stroke-opacity="0.96" stroke-width="1" fill="none"/></svg>
<div class="t" style="left:762px;top:92px;font-size:11px;color:#d0d0d0;letter-spacing:-2px;">&#x203A;&#x203A;</div>
<div class="a" style="left:774px;top:95px;width:1px;height:7px;background:#777;"></div>
<svg class="a" style="left:777px;top:96px" width="7" height="6" viewBox="0 0 7 6"><path d="M0 0.5h7M0 3h7M0 5.5h7" stroke="#999" stroke-width="1"/></svg>
<div class="a" style="left:623px;top:300px;width:164px;height:5px;background:#4a4a4a;"></div>
<div class="a" style="left:779px;top:106px;width:8px;height:194px;background:#4d4d4d;"></div>
<div class="a" style="left:629px;top:110px;width:13px;height:11px;background:#2e2e2e;"></div>
<svg class="a" style="left:631px;top:111px" width="9" height="8" viewBox="0 0 9 8"><rect x="1" y="1" width="7" height="6" fill="none" stroke="#d8d8d8" stroke-width="1.2"/></svg>
<div class="a" style="left:645px;top:111px;width:11px;height:9px;background:#eeeeee;"></div>
<svg class="a" style="left:645px;top:111px" width="11" height="9" viewBox="0 0 11 9"><ellipse cx="5.5" cy="4.5" rx="3.5" ry="2.8" fill="#333"/></svg>
<svg class="a" style="left:660px;top:112px" width="42" height="8"><path d="M1.0 7.5H5.7M1.5 6.5H5.2M0.3 1.5H4.9M4.5 2.2V7.5M2.5 1.8V6.4M1.4 7.5L3.9 1.2M7.2 6.5H11.7M8.7 6.5H12.1M8.5 7.5H12.8M8.1 3.5H12.3M10.5 1.7V7.2M8.5 0.4V7.7M11.5 0.2V6.0M8.1 7.5L11.6 2.7M15.0 7.5H19.4M15.4 5.5H19.0M15.1 1.5H18.7M15.2 4.5H18.8M14.9 3.5H19.3M15.5 1.1V6.4M18.5 0.9V5.6M16.5 1.8V7.8M14.3 7.5L17.2 2.5M21.5 6.5H25.7M22.6 6.5H25.3M22.4 6.5H25.9M22.2 3.5H26.0M21.4 7.5H25.2M24.5 0.8V5.8M22.5 1.8V7.8M25.5 1.0V5.9M22.1 7.5L25.1 3.8M28.4 5.5H33.4M28.8 2.5H33.4M29.3 2.5H32.7M29.7 3.5H33.4M28.3 4.5H32.3M33.5 0.3V7.3M29.5 0.0V5.9M30.5 0.8V6.5M36.5 5.5H40.4M35.6 7.5H39.4M35.3 7.5H39.3M39.5 1.9V7.6M40.5 0.3V7.3M38.5 0.8V6.2M35.8 7.5L39.2 2.9" stroke="rgb(215,215,215)" stroke-opacity="0.80" stroke-width="1" fill="none"/></svg>
<svg class="a" style="left:628px;top:131px" width="6" height="4" viewBox="0 0 6 4"><path d="M0.5 0.5L3 3L5.5 0.5" fill="none" stroke="#aaa" stroke-width="0.9"/></svg>
<svg class="a" style="left:636px;top:129px" width="14" height="8"><path d="M1.5 6.5H4.1M0.4 1.5H4.4M0.1 5.5H4.9M0.7 2.5H5.6M1.7 1.5H5.2M1.5 1.2V7.7M3.5 0.4V6.4M1.5 7.5L4.4 1.3M8.7 6.5H12.7M8.5 7.5H11.1M7.1 2.5H11.6M7.5 1.5H11.1M10.5 1.0V6.7M9.5 0.0V6.3" stroke="rgb(215,215,215)" stroke-opacity="0.96" stroke-width="1" fill="none"/></svg>
<div class="a" style="left:628px;top:140px;width:150px;height:1px;background:#4c4c4c;"></div>
<div class="t" style="left:628px;top:147px;font-size:7px;color:#a8a8a8;">W:</div>
<div class="t" style="left:641px;top:146px;font-size:7px;color:#dcdcdc;">110</div>
<svg class="a" style="left:656px;top:145px" width="14" height="8"><path d="M0.6 2.5H5.1M1.3 7.5H5.3M0.9 3.5H5.1M1.3 2.5H4.3M1.6 6.5H4.7M3.5 2.2V7.4M3.5 0.9V7.4M0.2 7.5L5.4 3.4M8.2 1.5H12.2M8.0 5.5H12.3M7.0 7.5H11.5M7.9 6.5H11.8M7.4 7.5H11.7M9.5 0.2V5.7M9.5 1.6V6.0M8.5 1.9V6.4" stroke="rgb(215,215,215)" stroke-opacity="0.80" stroke-width="1" fill="none"/></svg>
<div class="a" style="left:640px;top:155px;width:40px;height:1px;background:#4a4a4a;"></div>
<div class="t" style="left:688px;top:145px;font-size:10px;color:#c0c0c0;">&#x221E;</div>
<div class="t" style="left:703px;top:147px;font-size:7px;color:#a8a8a8;">H:</div>
<div class="t" style="left:714px;top:146px;font-size:7px;color:#dcdcdc;">110</div>
<svg class="a" style="left:728px;top:145px" width="14" height="8"><path d="M1.5 2.5H4.3M1.0 3.5H4.8M0.1 7.5H4.5M0.4 3.5H5.5M2.5 0.4V6.0M3.5 1.5V6.0M5.5 2.1V7.9M1.7 7.5L5.3 1.4M7.7 5.5H12.2M7.9 5.5H12.3M7.5 5.5H12.3M11.5 1.1V6.9M11.5 1.8V7.6M11.5 0.9V6.8M7.7 7.5L11.0 2.1" stroke="rgb(215,215,215)" stroke-opacity="0.80" stroke-width="1" fill="none"/></svg>
<div class="a" style="left:713px;top:155px;width:42px;height:1px;background:#4a4a4a;"></div>
<div class="t" style="left:628px;top:162px;font-size:7px;color:#a8a8a8;">X:</div>
<div class="t" style="left:641px;top:161px;font-size:7px;color:#dcdcdc;">33</div>
<svg class="a" style="left:651px;top:161px" width="14" height="8"><path d="M0.0 4.5H5.3M0.5 5.5H4.9M0.4 7.5H5.3M1.5 1.5V5.9M1.5 1.0V6.1M3.5 0.9V7.9M0.7 7.5L5.0 1.9M8.1 4.5H12.4M8.5 2.5H12.6M8.7 5.5H11.3M7.1 5.5H12.4M8.5 1.1V7.1M9.5 2.2V6.5" stroke="rgb(215,215,215)" stroke-opacity="0.80" stroke-width="1" fill="none"/></svg>
<div class="a" style="left:640px;top:171px;width:40px;height:1px;background:#4a4a4a;"></div>
<div class="t" style="left:703px;top:162px;font-size:7px;color:#a8a8a8;">Y:</div>
<div class="t" style="left:714px;top:161px;font-size:7px;color:#dcdcdc;">44</div>
<svg class="a" style="left:724px;top:161px" width="14" height="8"><path d="M0.8 5.5H5.0M0.7 6.5H5.0M0.8 7.5H4.9M4.5 1.8V7.0M1.5 1.6V6.7M7.4 1.5H12.7M7.2 6.5H12.6M8.0 6.5H12.7M8.2 5.5H12.0M10.5 1.8V6.0M8.5 1.0V7.9" stroke="rgb(215,215,215)" stroke-opacity="0.80" stroke-width="1" fill="none"/></svg>
<div class="a" style="left:713px;top:171px;width:42px;height:1px;background:#4a4a4a;"></div>
<svg class="a" style="left:628px;top:176px" width="6" height="4" viewBox="0 0 6 4"><path d="M0.5 0.5L3 3L5.5 0.5" fill="none" stroke="#aaa" stroke-width="0.9"/></svg>
<svg class="a" style="left:636px;top:173px" width="28" height="8"><path d="M0.9 3.5H5.8M0.5 7.5H5.3M0.4 3.5H4.3M0.9 4.5H5.1M2.5 0.6V7.1M3.5 1.3V7.3M0.4 7.5L4.8 3.8M8.0 4.5H12.2M7.3 6.5H11.2M7.1 4.5H12.3M7.7 4.5H11.8M7.5 3.5H11.4M8.5 0.5V5.7M10.5 1.0V6.3M8.5 0.5V7.6M15.5 1.5H19.7M14.3 5.5H18.2M15.4 4.5H18.9M18.5 1.3V7.6M18.5 1.7V6.8M17.5 0.5V7.8M14.4 7.5L19.3 3.1M21.3 5.5H26.7M21.1 5.5H25.3M21.4 3.5H25.8M22.0 3.5H26.5M23.5 2.0V7.6M25.5 2.4V7.1M22.5 0.9V6.5M22.1 7.5L24.3 2.4" stroke="rgb(215,215,215)" stroke-opacity="0.96" stroke-width="1" fill="none"/></svg>
<div class="a" style="left:627px;top:184px;width:17px;height:11px;background:#1f22d8;border:1px solid #8c8cb0;box-sizing:border-box;"></div>
<div class="a" style="left:648px;top:184px;width:15px;height:11px;background:#f4f4f4;"></div>
<svg class="a" style="left:648px;top:184px" width="15" height="11" viewBox="0 0 15 11"><path d="M3 6h8.5M11 4v4" stroke="#222" stroke-width="1.7"/><path d="M11.5 2.5L9 3.5" stroke="#a03030" stroke-width="0.7"/></svg>
<div class="t" style="left:668px;top:186px;font-size:7px;color:#dcdcdc;">3</div>
<svg class="a" style="left:673px;top:186px" width="14" height="8"><path d="M0.6 2.5H5.1M0.6 1.5H4.7M1.1 2.5H4.9M0.9 1.5H5.8M1.5 6.5H4.2M3.5 2.1V6.6M3.5 0.2V7.7M1.8 7.5L5.4 1.7M8.0 1.5H11.1M8.6 3.5H11.7M7.6 1.5H12.0M8.3 2.5H12.5M11.5 1.7V6.9M11.5 0.3V7.6M9.5 0.1V7.9" stroke="rgb(215,215,215)" stroke-opacity="0.80" stroke-width="1" fill="none"/></svg>
<div class="a" style="left:667px;top:196px;width:42px;height:1px;background:#4a4a4a;"></div>
<svg class="a" style="left:707px;top:188px" width="6" height="4" viewBox="0 0 6 4"><path d="M0.5 0.5L3 3L5.5 0.5" fill="none" stroke="#aaa" stroke-width="0.9"/></svg>
<div class="a" style="left:716px;top:184px;width:39px;height:12px;background:#3f3f3f;"></div>
<div class="a" style="left:719px;top:189px;width:26px;height:2px;background:#e0e0e0;"></div>
<svg class="a" style="left:747px;top:188px" width="6" height="4" viewBox="0 0 6 4"><path d="M0.5 0.5L3 3L5.5 0.5" fill="none" stroke="#aaa" stroke-width="0.9"/></svg>
<div class="a" style="left:629px;top:201px;width:35px;height:10px;background:#444444;"></div>
<svg class="a" style="left:656px;top:204px" width="6" height="4" viewBox="0 0 6 4"><path d="M0.5 0.5L3 3L5.5 0.5" fill="none" stroke="#999" stroke-width="0.9"/></svg>
<div class="a" style="left:668px;top:201px;width:36px;height:10px;background:#444444;"></div>
<svg class="a" style="left:696px;top:204px" width="6" height="4" viewBox="0 0 6 4"><path d="M0.5 0.5L3 3L5.5 0.5" fill="none" stroke="#999" stroke-width="0.9"/></svg>
<div class="a" style="left:708px;top:201px;width:47px;height:10px;background:#444444;"></div>
<svg class="a" style="left:747px;top:204px" width="6" height="4" viewBox="0 0 6 4"><path d="M0.5 0.5L3 3L5.5 0.5" fill="none" stroke="#999" stroke-width="0.9"/></svg>
<svg class="a" style="left:632px;top:202px" width="8" height="8" viewBox="0 0 8 8"><circle cx="4" cy="4" r="2.2" fill="none" stroke="#eee" stroke-width="1.5"/></svg>
<svg class="a" style="left:671px;top:202px" width="8" height="8" viewBox="0 0 8 8"><path d="M1 1h5v6H1" fill="none" stroke="#eee" stroke-width="1.6"/><path d="M3 3h3v2H3" fill="#eee"/></svg>
<svg class="a" style="left:711px;top:202px" width="9" height="8" viewBox="0 0 9 8"><rect x="1" y="1" width="6.5" height="6.5" fill="none" stroke="#eee" stroke-width="1.4"/><rect x="3.5" y="3.5" width="2" height="4" fill="#eee"/></svg>
<svg class="a" style="left:628px;top:217px" width="6" height="4" viewBox="0 0 6 4"><path d="M0.5 0.5L3 3L5.5 0.5" fill="none" stroke="#aaa" stroke-width="0.9"/></svg>
<svg class="a" style="left:636px;top:215px" width="28" height="8"><path d="M0.2 5.5H4.8M0.7 3.5H4.6M0.3 2.5H4.2M1.5 3.5H4.3M2.5 0.6V7.7M2.5 0.4V7.4M3.5 0.8V7.4M7.6 4.5H12.5M7.4 3.5H12.6M8.5 2.5H11.9M8.5 2.3V6.8M11.5 1.4V6.3M8.5 7.5L10.4 1.8M15.1 3.5H19.6M14.2 4.5H18.6M14.4 2.5H18.5M18.5 0.2V7.2M15.5 0.5V6.1M14.6 7.5L17.2 3.3M21.0 7.5H25.2M21.7 3.5H26.6M22.3 2.5H25.6M21.6 2.5H26.6M21.4 2.5H26.2M26.5 1.9V6.8M24.5 1.9V5.8" stroke="rgb(215,215,215)" stroke-opacity="0.96" stroke-width="1" fill="none"/></svg>
<div class="a" style="left:653px;top:226px;width:18px;height:13px;background:#3c3c3c;"></div>
<div class="a" style="left:672px;top:226px;width:18px;height:13px;background:#444444;"></div>
<div class="a" style="left:691px;top:226px;width:18px;height:13px;background:#444444;"></div>
<div class="a" style="left:710px;top:226px;width:18px;height:13px;background:#444444;"></div>
<svg class="a" style="left:657px;top:228px" width="11" height="10" viewBox="0 0 11 10"><rect x="0.5" y="0.5" width="6" height="6" fill="#eee"/><rect x="3.5" y="3.5" width="6" height="6" fill="#eee" stroke="#333" stroke-width="0.6"/></svg>
<svg class="a" style="left:676px;top:228px" width="11" height="10" viewBox="0 0 11 10"><rect x="0.5" y="0.5" width="6" height="6" fill="#eee"/><rect x="3.5" y="3.5" width="6" height="6" fill="#535353" stroke="#eee" stroke-width="1"/></svg>
<svg class="a" style="left:695px;top:228px" width="11" height="10" viewBox="0 0 11 10"><rect x="0.5" y="0.5" width="6" height="6" fill="none" stroke="#eee"/><rect x="3.5" y="3.5" width="6" height="6" fill="none" stroke="#eee"/><rect x="3.5" y="3.5" width="3" height="3" fill="#eee"/></svg>
<svg class="a" style="left:714px;top:228px" width="11" height="10" viewBox="0 0 11 10"><rect x="0.5" y="0.5" width="6" height="6" fill="#eee"/><rect x="3.5" y="3.5" width="6" height="6" fill="#eee"/><rect x="3.5" y="3.5" width="3" height="3" fill="#333"/></svg>
</div></body></html>
